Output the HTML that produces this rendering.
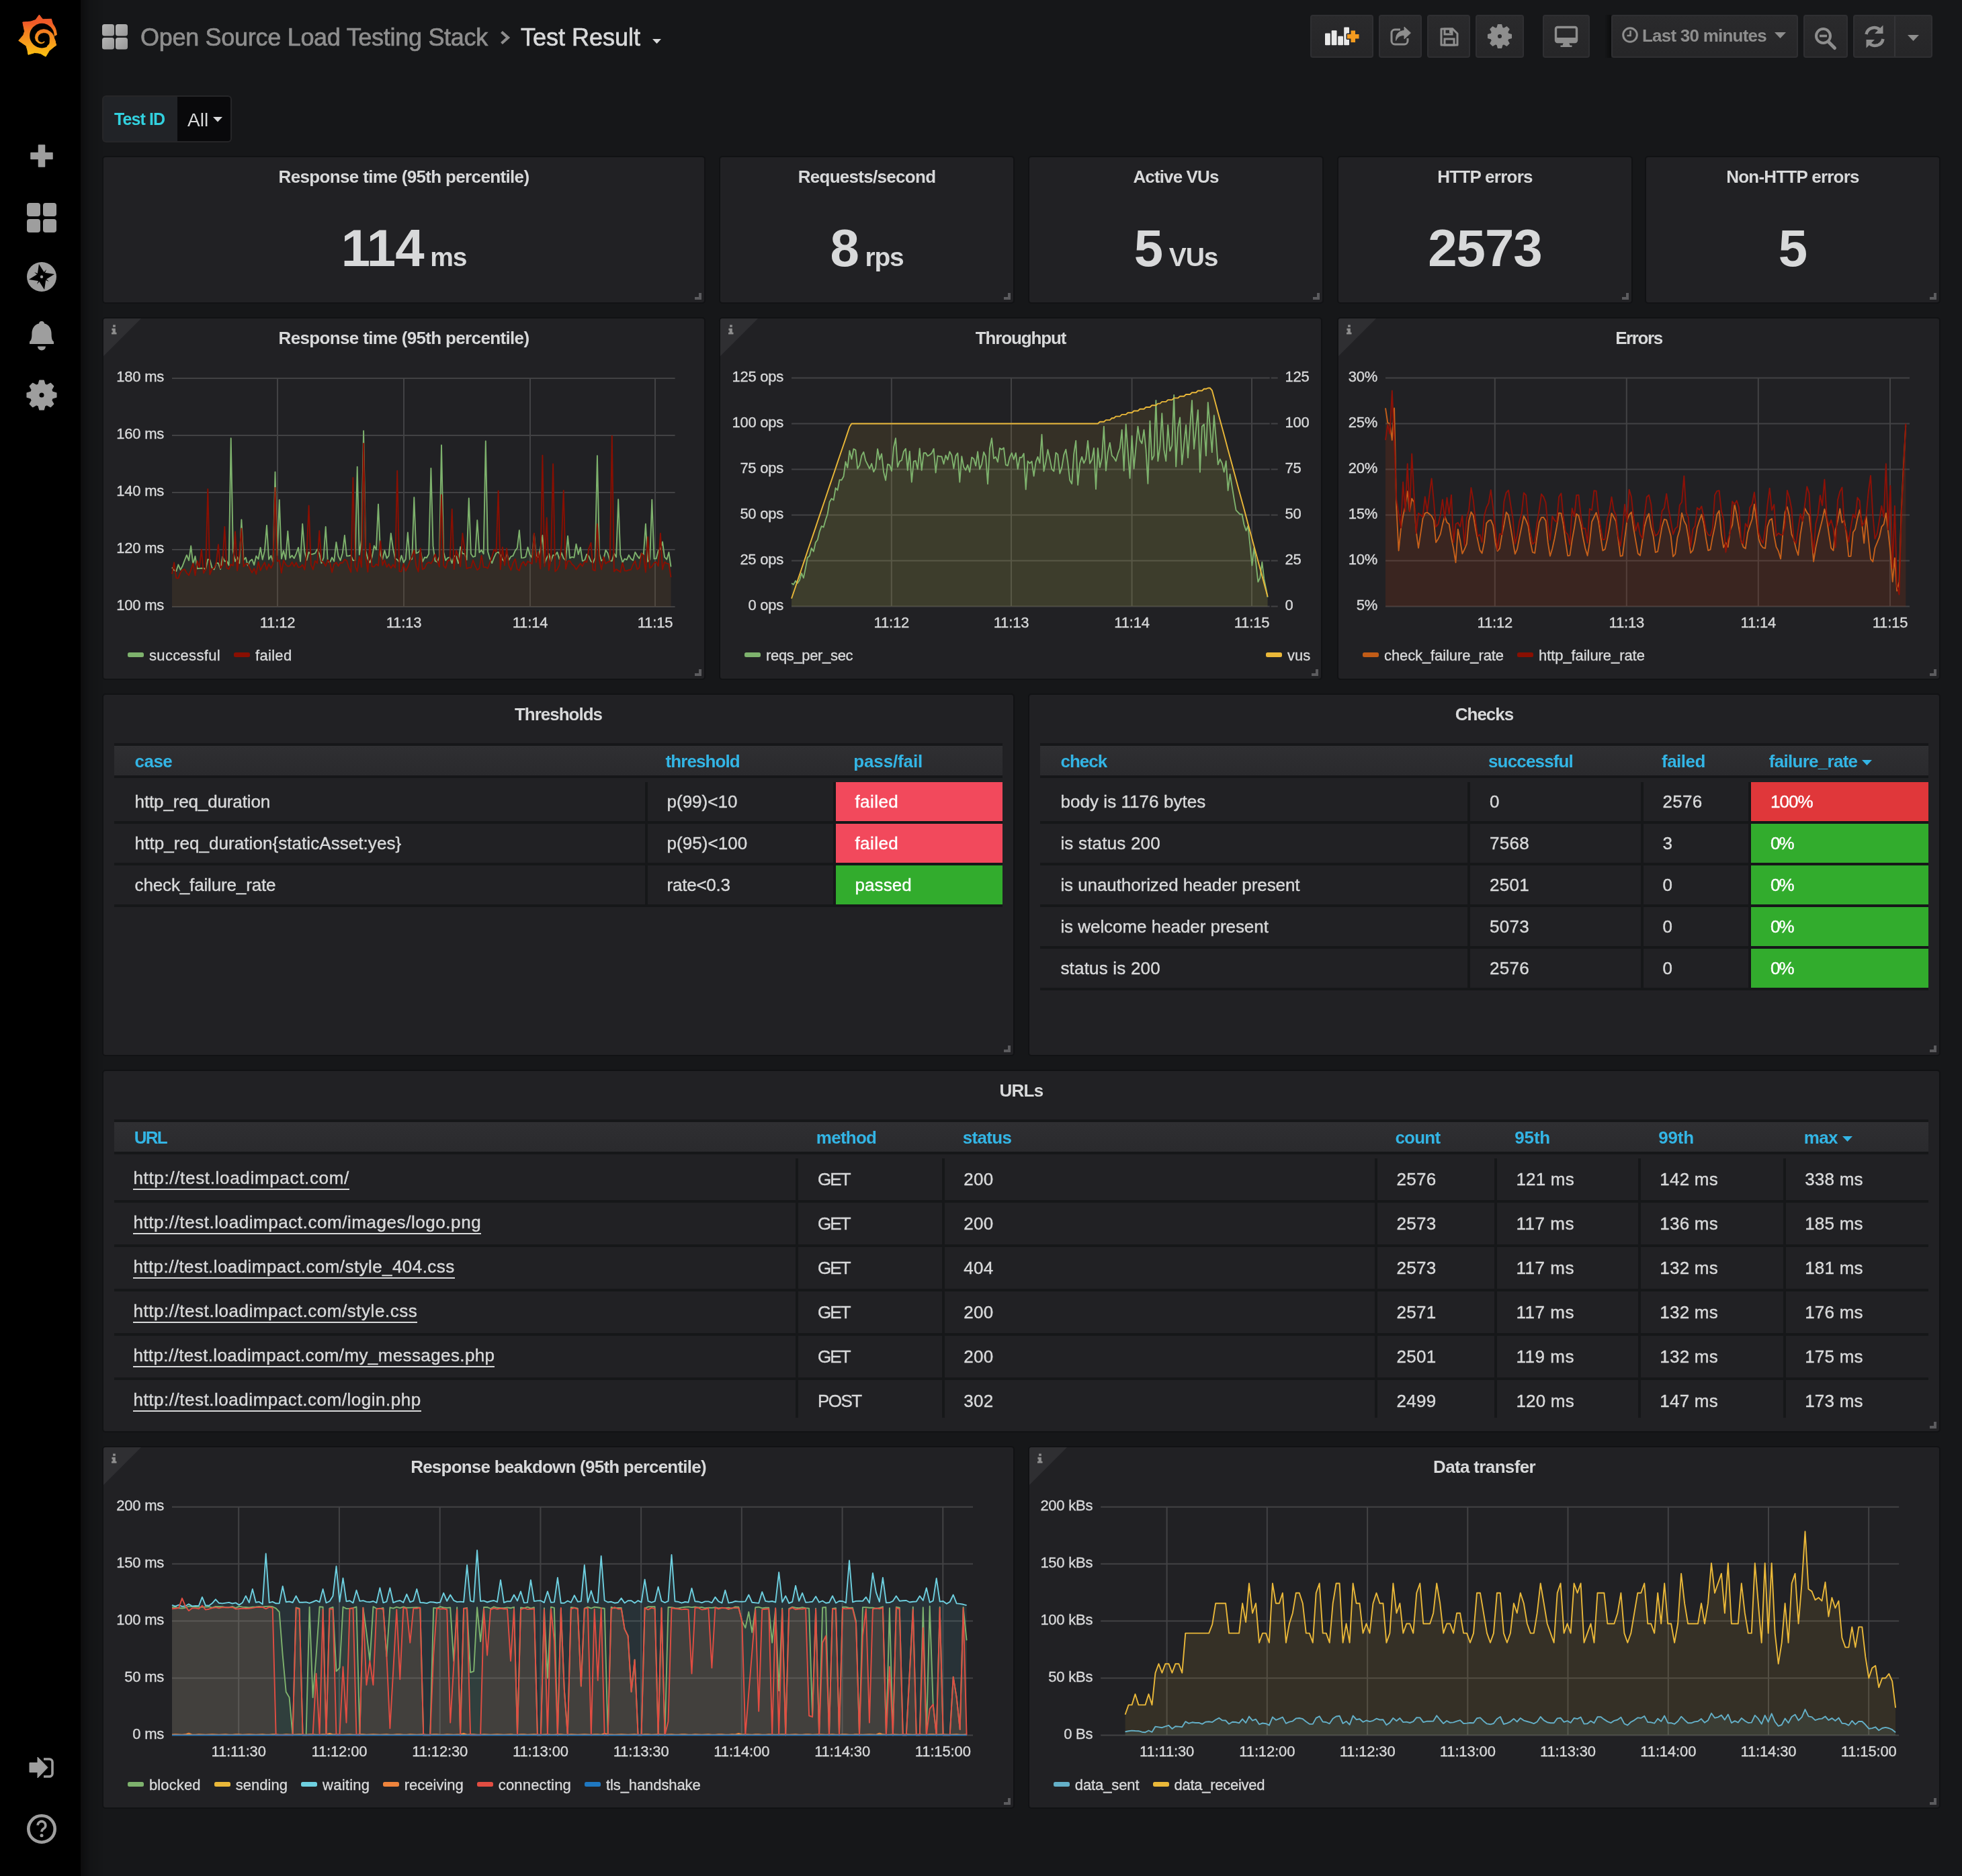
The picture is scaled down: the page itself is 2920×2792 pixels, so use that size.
<!DOCTYPE html><html><head><meta charset="utf-8"><title>Test Result - Grafana</title><style>
*{box-sizing:border-box}
html,body{margin:0;padding:0}
body{width:2920px;height:2792px;background:#161719;position:relative;overflow:hidden;font-family:"Liberation Sans",sans-serif;color:#d8d9da;font-size:26px}
.a{position:absolute}
#side{left:0;top:0;width:120px;height:2792px;background:#000}
#shade{left:120px;top:0;width:34px;height:2792px;background:linear-gradient(90deg,rgba(0,0,0,.42),rgba(0,0,0,.12) 40%,rgba(0,0,0,0))}
.p{position:absolute;background:#212124;border:2px solid #111214;border-radius:5px}
.t{position:absolute;left:0;right:0;top:13.5px;text-align:center;font-size:26px;line-height:30px;font-weight:700;letter-spacing:-.7px;white-space:pre}
.rz{position:absolute;right:4px;bottom:4px;width:10px;height:10px;border-right:4px solid #5b5b5e;border-bottom:4px solid #5b5b5e}
.ic{position:absolute;left:0;top:0;width:0;height:0;border-top:56px solid #2f2f32;border-right:56px solid transparent;border-top-left-radius:3px}
.ii{position:absolute;left:12px;top:8.8px;width:7.5px;height:15px}
.v{position:absolute;left:0;right:0;top:89px;text-align:center;white-space:pre;line-height:92px;height:92px}
.v b{font-weight:700;font-size:78px;letter-spacing:-1px}
.v i{font-style:normal;font-weight:700;font-size:39px;letter-spacing:-1.2px}
.nb{position:absolute;top:22px;height:64px;border-radius:4px;background:linear-gradient(180deg,#2a2a2c,#262628);border:2px solid #2f2f32}
svg{position:absolute;left:0;top:0;overflow:visible}
svg text{font-family:"Liberation Sans",sans-serif;font-size:22px;fill:#d8d9da;stroke:#d8d9da;stroke-width:.35px}
.lg{position:absolute;font-size:22px;line-height:26px;white-space:pre;letter-spacing:.2px;-webkit-text-stroke:.35px}
.lg s{position:absolute;width:24px;height:7px;border-radius:2.5px;top:8.4px}
.th{position:absolute;height:52px;background:linear-gradient(180deg,#2f2f32,#2a2a2d);border-top:4px solid #161719;border-bottom:4px solid #161719}
.h{position:absolute;font-size:26px;line-height:30px;color:#33b5e5;font-weight:700;letter-spacing:-.75px;white-space:pre}
.c{position:absolute;font-size:26px;line-height:30px;white-space:pre;letter-spacing:-.15px;-webkit-text-stroke:.4px}
.rb{position:absolute;height:4px;background:#161719}
.cb{position:absolute;width:4px;background:#161719}
.cc{position:absolute;height:58px}
.u{border-bottom:2px solid #d8d9da;padding-bottom:1px}
</style></head><body><div id="root" style="position:absolute;left:0;top:0;width:2920px;height:2792px;will-change:transform">
<div id="side" class="a"></div><div id="shade" class="a"></div>
<svg width="120" height="2792" viewBox="0 0 120 2792">
<defs><linearGradient id="gl" gradientUnits="userSpaceOnUse" x1="0" y1="84" x2="0" y2="22"><stop offset="0" stop-color="#fbc30f"/><stop offset=".25" stop-color="#f9a61a"/><stop offset=".6" stop-color="#f47e20"/><stop offset=".8" stop-color="#f05a28"/><stop offset="1" stop-color="#f05a28"/></linearGradient></defs>
<path d="M58.4 22 L61 25.5 L63.8 28.8 L69.9 28.5 L76.5 28.3 L77.4 32 L78.4 35.3 L81.7 40.5 L83.5 45.6 L84.4 51.7 L80.7 53.4 L80.5 56.9 L83.8 67.2 L78.9 70.5 L74.6 73.3 L71.8 78 L68.1 84.1 L63.8 81.8 L61 79.9 L56.8 78.9 L51.6 78.5 L42 81.3 L40.9 74.7 L39 68.2 L27.7 60.4 L34.8 52.2 L36.6 46.6 L35.2 40 L33.8 33 L40.4 32.5 L46 32 L53.1 29.5Z" fill="url(#gl)" stroke="url(#gl)" stroke-width="1" stroke-linejoin="round"/><circle cx="62.4" cy="53.1" r="18.3" fill="#000"/><path d="M66.4 62.1 L64.8 63.9 L61 65.1 L57.3 63.9 L53.5 60.7 L52.1 56 L53.1 51.3 L55.9 47.1 L60.1 44.5 L65.2 43.5 L70.4 44.5 L74.6 47.1 L77.9 49.9 L79.8 53.2 L80.5 56.9 L82.6 61.6 L81.7 68.6 L74.6 74.7 L71.3 72.4 L69.9 69.1 L73 65.8 L73.9 63.9 L74.2 56.9 L73.5 53.2 L71.3 50.3 L68.1 48.9 L64.8 48.7 L61 49.6 L57.7 52.2 L56.1 56 L56.6 59.7 L58.7 62.3 L61.5 63.2 L63.8 63 L65.7 61.6Z" fill="url(#gl)" stroke="url(#gl)" stroke-width=".6" stroke-linejoin="round"/>
<path d="M57.5 216h9v11.5h11.5v9h-11.5v11.5h-9v-11.5h-11.5v-9h11.5z" fill="#9e9e9e" stroke="#9e9e9e" stroke-width="1.5" stroke-linejoin="round"/>
<rect x="40" y="302" width="20" height="20" rx="4" fill="#9e9e9e"/>
<rect x="64" y="302" width="20" height="20" rx="4" fill="#9e9e9e"/>
<rect x="40" y="326" width="20" height="20" rx="4" fill="#9e9e9e"/>
<rect x="64" y="326" width="20" height="20" rx="4" fill="#9e9e9e"/>
<circle cx="62" cy="412" r="22" fill="#9e9e9e"/>
<path d="M62 392.5 L67.3 406.7 L81.5 412 L67.3 417.3 L62 431.5 L56.7 417.3 L42.5 412 L56.7 406.7Z" fill="#000" transform="rotate(-12 62 412)"/>
<path d="M62 399 L64 410 L75 412 L64 414 L62 425 L60 414 L49 412 L60 410Z" fill="#000" transform="rotate(33 62 412)"/>
<circle cx="62" cy="412" r="2.2" fill="#9e9e9e"/>
<path d="M62 478c2.5 0 4 1.6 4 3.6c7 1.6 10.6 7.6 10.6 15.4c0 7 1.2 9.6 3.4 11.6v3.4h-36v-3.4c2.2-2 3.4-4.6 3.4-11.6c0-7.8 3.6-13.8 10.6-15.4c0-2 1.5-3.6 4-3.6z" fill="#9e9e9e"/>
<path d="M56 515.5h12a6 6 0 0 1 -12 0z" fill="#9e9e9e"/>
<path d="M57.2 572.1 L58.9 566.2 L65.1 566.2 L66.8 572.1 L69.9 573.4 L75.2 570.4 L79.6 574.8 L76.6 580.1 L77.9 583.2 L83.8 584.9 L83.8 591.1 L77.9 592.8 L76.6 595.9 L79.6 601.2 L75.2 605.6 L69.9 602.6 L66.8 603.9 L65.1 609.8 L58.9 609.8 L57.2 603.9 L54.1 602.6 L48.8 605.6 L44.4 601.2 L47.4 595.9 L46.1 592.8 L40.2 591.1 L40.2 584.9 L46.1 583.2 L47.4 580.1 L44.4 574.8 L48.8 570.4 L54.1 573.4Z M57.7 588 a4.3 4.3 0 1 0 8.6 0 a4.3 4.3 0 1 0 -8.6 0Z" fill="#9e9e9e" fill-rule="evenodd" stroke="#9e9e9e" stroke-width="1.5" stroke-linejoin="round"/>
<path d="M44 2623.5h12v-8.5l15 15.5l-15 15.5v-8.5h-12z" fill="#9e9e9e" stroke="#9e9e9e" stroke-width="1" stroke-linejoin="round"/>
<path d="M65 2618h8.5a4.5 4.5 0 0 1 4.5 4.5v17a4.5 4.5 0 0 1 -4.5 4.5h-8.5" fill="none" stroke="#9e9e9e" stroke-width="3.6"/>
<circle cx="62" cy="2722" r="19.7" fill="none" stroke="#9e9e9e" stroke-width="4.6"/>
<path d="M56.2 2716.5a5.8 5.8 0 1 1 8.8 5c-2.2 1.4-3 2.4-3 4.7" fill="none" stroke="#9e9e9e" stroke-width="3.6"/>
<circle cx="62" cy="2731.7" r="2.5" fill="#9e9e9e"/>
</svg>
<svg width="2920" height="110" viewBox="0 0 2920 110">
<defs><linearGradient id="dg" x1="0" y1="0" x2="1" y2="1"><stop offset="0" stop-color="#b5b5b5"/><stop offset="1" stop-color="#979797"/></linearGradient></defs>
<rect x="152" y="36" width="18" height="17.5" rx="3.5" fill="url(#dg)"/>
<rect x="172" y="36" width="18" height="17.5" rx="3.5" fill="url(#dg)"/>
<rect x="152" y="56" width="18" height="17.5" rx="3.5" fill="url(#dg)"/>
<rect x="172" y="56" width="18" height="17.5" rx="3.5" fill="url(#dg)"/>
<path d="M746.5 47.5l9.5 8.5l-9.5 8.5" fill="none" stroke="#8e8e8e" stroke-width="4.2"/>
<path d="M971 58h13l-6.5 7z" fill="#d8d9da"/>
</svg>
<div class="a" style="left:209px;top:34.8px;font-size:36px;line-height:42px;color:#8e8e8e;letter-spacing:-.29px;-webkit-text-stroke:.7px;white-space:pre">Open Source Load Testing Stack</div>
<div class="a" style="left:775px;top:34.8px;font-size:36px;line-height:42px;color:#d8d9da;-webkit-text-stroke:.7px;white-space:pre">Test Result</div>
<div class="nb" style="left:1950px;width:94px"></div>
<div class="nb" style="left:2052px;width:64px"></div>
<div class="nb" style="left:2124px;width:64px"></div>
<div class="nb" style="left:2196px;width:72px"></div>
<div class="nb" style="left:2296px;width:70px"></div>
<div class="nb" style="left:2398px;width:278px"></div>
<div class="nb" style="left:2684px;width:66px"></div>
<div class="nb" style="left:2758px;width:118px"></div>
<div class="a" style="left:2388px;top:22px;width:10px;height:64px;background:linear-gradient(90deg,rgba(0,0,0,0),rgba(0,0,0,.45))"></div>
<div class="a" style="left:2819px;top:24px;width:2px;height:60px;background:#343437"></div>
<div class="a" style="left:2444px;top:38px;font-size:26px;line-height:30px;color:#8e8e8e;font-weight:700;letter-spacing:-.77px;white-space:pre">Last 30 minutes</div>
<svg width="2920" height="110" viewBox="0 0 2920 110">
<rect x="1972" y="49.5" width="7.8" height="17.8" rx="1" fill="#e9e9e9"/>
<rect x="1981.7" y="45.3" width="7.8" height="22" rx="1" fill="#e9e9e9"/>
<rect x="1991.2" y="53.8" width="7.8" height="13.5" rx="1" fill="#e9e9e9"/>
<rect x="2000.2" y="40.5" width="7.8" height="26.8" rx="1" fill="#e9e9e9"/>
<path d="M2010.5 45.5h6.5v5.5h5.5v6.5h-5.5v5.5h-6.5v-5.5h-5.5v-6.5h5.5z" fill="#f49b1f" stroke="#2a2a2c" stroke-width="3" stroke-linejoin="round"/>
<path d="M2010.5 45.5h6.5v5.5h5.5v6.5h-5.5v5.5h-6.5v-5.5h-5.5v-6.5h5.5z" fill="#f49b1f"/>
<path d="M2084 44h-8a5 5 0 0 0 -5 5v12a5 5 0 0 0 5 5h14a5 5 0 0 0 5 -5v-4" fill="none" stroke="#8e8e8e" stroke-width="3"/>
<path d="M2090 40l9.5 9l-9.5 9v-5.5c-7 0-10 2.5-12.5 8c-.5-9 3.5-14.5 12.5-15z" fill="#8e8e8e" stroke="#8e8e8e" stroke-width="1" stroke-linejoin="round"/>
<path d="M2145 43h17l7 7v17h-24z" fill="none" stroke="#8e8e8e" stroke-width="3" stroke-linejoin="round"/>
<rect x="2150" y="43" width="11" height="8" fill="none" stroke="#8e8e8e" stroke-width="3"/><rect x="2157" y="44" width="3" height="5" fill="#8e8e8e"/>
<rect x="2150" y="58" width="14" height="9" fill="none" stroke="#8e8e8e" stroke-width="3"/>
<path d="M2228.2 41.4 L2229.5 36.7 L2234.5 36.7 L2235.8 41.4 L2238.3 42.4 L2242.5 40 L2246 43.5 L2243.6 47.7 L2244.6 50.2 L2249.3 51.5 L2249.3 56.5 L2244.6 57.8 L2243.6 60.3 L2246 64.5 L2242.5 68 L2238.3 65.6 L2235.8 66.6 L2234.5 71.3 L2229.5 71.3 L2228.2 66.6 L2225.7 65.6 L2221.5 68 L2218 64.5 L2220.4 60.3 L2219.4 57.8 L2214.7 56.5 L2214.7 51.5 L2219.4 50.2 L2220.4 47.7 L2218 43.5 L2221.5 40 L2225.7 42.4Z M2228.2 54 a3.8 3.8 0 1 0 7.6 0 a3.8 3.8 0 1 0 -7.6 0Z" fill="#8e8e8e" fill-rule="evenodd" stroke="#8e8e8e" stroke-width="1.5" stroke-linejoin="round"/>
<rect x="2315.5" y="40.5" width="31" height="22" rx="2.5" fill="none" stroke="#8e8e8e" stroke-width="3.4"/><rect x="2317" y="56" width="28" height="5" fill="#8e8e8e"/>
<path d="M2327 63h8l1.5 4.5h3v2.5h-17v-2.5h3z" fill="#8e8e8e"/>
<circle cx="2426" cy="52" r="10.3" fill="none" stroke="#8e8e8e" stroke-width="3"/><path d="M2426.5 45.5v7.5h-5" fill="none" stroke="#8e8e8e" stroke-width="2.6"/>
<path d="M2641 48h17l-8.5 9z" fill="#8e8e8e"/>
<circle cx="2713.5" cy="53.5" r="10.5" fill="none" stroke="#8e8e8e" stroke-width="4"/><path d="M2721.5 62.5l9 9" stroke="#8e8e8e" stroke-width="5" stroke-linecap="round"/><path d="M2708 53.5h11" stroke="#8e8e8e" stroke-width="3.6"/>
<path d="M2777.5 51a12 12 0 0 1 21.5 -5" fill="none" stroke="#8e8e8e" stroke-width="4.6"/><path d="M2802.5 37.5v12.5h-12.5z" fill="#8e8e8e"/>
<path d="M2802.5 58a12 12 0 0 1 -21.5 5" fill="none" stroke="#8e8e8e" stroke-width="4.6"/><path d="M2777.5 71.5v-12.5h12.5z" fill="#8e8e8e"/>
<path d="M2839 52h17l-8.5 9z" fill="#8e8e8e"/>
</svg>
<div class="a" style="left:152px;top:142px;width:112px;height:70px;background:#212327;border:2px solid #262628;border-right:none;border-radius:6px 0 0 6px"></div>
<div class="a" style="left:264px;top:142px;width:81px;height:70px;background:#09090b;border:2px solid #262628;border-left:none;border-radius:0 6px 6px 0"></div>
<div class="a" style="left:170px;top:162px;font-size:25px;line-height:30px;color:#32d1df;font-weight:700;white-space:pre;letter-spacing:-.9px">Test ID</div>
<div class="a" style="left:279px;top:163.2px;font-size:28px;line-height:32px;color:#d8d9da;white-space:pre">All</div>
<svg width="400" height="240"><path d="M317 174h14l-7 7.5z" fill="#d8d9da"/></svg>
<div class="p" style="left:152px;top:232px;width:898px;height:220px">
<div class="t" style="letter-spacing:-0.65px">Response time (95th percentile)</div>
<div class="v"><b>114</b><i> ms</i></div>
<div class="rz"></div></div>
<div class="p" style="left:1070px;top:232px;width:440px;height:220px">
<div class="t" style="letter-spacing:-0.71px">Requests/second</div>
<div class="v"><b>8</b><i> rps</i></div>
<div class="rz"></div></div>
<div class="p" style="left:1530px;top:232px;width:440px;height:220px">
<div class="t" style="letter-spacing:-0.86px">Active VUs</div>
<div class="v"><b>5</b><i> VUs</i></div>
<div class="rz"></div></div>
<div class="p" style="left:1990px;top:232px;width:440px;height:220px">
<div class="t" style="letter-spacing:-0.74px">HTTP errors</div>
<div class="v"><b>2573</b></div>
<div class="rz"></div></div>
<div class="p" style="left:2448px;top:232px;width:440px;height:220px">
<div class="t" style="letter-spacing:-0.76px">Non-HTTP errors</div>
<div class="v"><b>5</b></div>
<div class="rz"></div></div>
<div class="p" style="left:152px;top:472px;width:898px;height:540px">
<div class="ic"></div><svg class="ii" viewBox="0 0 9 17"><path d="M2.5 0h4.5v4h-4.5zM.5 6.5h6.5v7h2v3.5h-9v-3.5h2v-3.5h-1.5z" fill="#8e8e8e"/></svg>
<div class="t" style="letter-spacing:-0.65px">Response time (95th percentile)</div>
<svg width="894" height="536" viewBox="154 474 894 536">
<path d="M256 563H1004.6M256 648H1004.6M256 733H1004.6M256 818H1004.6M256 903H1004.6M413 563V903M601 563V903M789 563V903M975 563V903" stroke="rgba(200,200,200,.2)" stroke-width="2" fill="none"/>
<polygon points="256,903 256,844.4 259.1,848.7 262.3,850.1 265.4,840.3 268.5,848 271.7,842.2 274.8,833.9 277.9,826.2 281.1,834.2 284.2,812.5 287.3,839.8 290.5,827.8 293.6,846.4 296.7,845.9 299.9,845.7 303,845.5 306.1,847.4 309.3,832.4 312.4,833.1 315.5,845 318.7,847.5 321.8,837.8 324.9,838.2 328.1,847.2 331.2,828.4 334.3,835.4 337.5,835 340.6,841.3 343.7,652.2 346.9,820.5 350,835.5 353.1,829.1 356.3,838.3 359.4,773.4 362.5,833.4 365.7,829.8 368.8,841.6 371.9,834.9 375.1,832.5 378.2,840.8 381.3,827.5 384.5,832 387.6,815 390.7,832.9 393.9,819.7 397,781.9 400.1,832.6 403.3,827 406.4,836.3 409.5,702.4 412.6,826.6 415.8,744 418.9,831.6 422,819.6 425.2,832.7 428.3,790.4 431.4,830.3 434.6,826.6 437.7,831 440.8,824.1 444,814.9 447.1,835.6 450.2,779.8 453.4,821.6 456.5,833.5 459.6,821.6 462.8,825 465.9,824.5 469,823.4 472.2,817.4 475.3,824.3 478.4,838.1 481.6,829.8 484.7,784 487.8,835.3 491,837.3 494.1,829.6 497.2,835.3 500.4,806.9 503.5,827.7 506.6,834 509.8,823.2 512.9,796.8 516,827.5 519.2,827.2 522.3,826.5 525.4,834 528.6,834.1 531.7,694.8 534.8,825.6 538,803.9 541.1,641.2 544.2,819.2 547.4,831.8 550.5,837.2 553.6,829.5 556.8,812.2 559.9,818.1 563,750.4 566.2,825.9 569.3,832.3 572.4,819.2 575.6,830.8 578.7,827 581.8,793.8 585,816.5 588.1,831.2 591.2,832.9 594.4,836.8 597.5,826.7 600.6,837 603.8,832.3 606.9,792.5 610,833 613.2,832.2 616.3,740.2 619.4,823.4 622.6,822 625.7,818.2 628.8,836 632,829.5 635.1,830 638.2,824.4 641.4,696.9 644.5,812.4 647.6,834.9 650.8,836.4 653.9,828.5 657,662.5 660.2,821.8 663.3,834 666.4,830.2 669.6,829.4 672.7,838.2 675.8,827.5 679,827.6 682.1,838.4 685.2,814 688.4,823.8 691.5,824.4 694.6,833.1 697.8,741.5 700.9,824.3 704,828.8 707.2,827.9 710.3,774.2 713.4,822.3 716.6,818.7 719.7,824.2 722.8,656.5 726,821.1 729.1,831.6 732.2,838.1 735.3,829.7 738.5,823 741.6,821.6 744.7,825.6 747.9,832.8 751,836.1 754.1,822.9 757.3,833.5 760.4,828.3 763.5,827.2 766.7,819.6 769.8,815.5 772.9,789.1 776.1,830.4 779.2,830.1 782.3,828.8 785.5,814.4 788.6,825.6 791.7,829.9 794.9,794.6 798,827.1 801.1,828.8 804.3,816 807.4,796.8 810.5,837.9 813.7,830.4 816.8,824.2 819.9,835 823.1,826.1 826.2,826.6 829.3,821.7 832.5,832.1 835.6,822.6 838.7,830.9 841.9,834.1 845,797.6 848.1,830.6 851.3,828.9 854.4,829.8 857.5,809.6 860.7,825 863.8,814.7 866.9,834.9 870.1,833.9 873.2,824.9 876.3,827.8 879.5,835.5 882.6,837.4 885.7,830.1 888.9,678.2 892,823.7 895.1,834.5 898.3,832.2 901.4,818.6 904.5,823.3 907.7,834.7 910.8,834.8 913.9,823.7 917.1,829.1 920.2,743.2 923.3,825.4 926.5,837 929.6,831.7 932.7,833.1 935.9,826.1 939,831.5 942.1,834.1 945.3,821.8 948.4,827.1 951.5,831.1 954.7,823.4 957.8,825.6 960.9,779.8 964.1,835.9 967.2,832.9 970.3,743.6 973.5,831.5 976.6,831.4 979.7,819.5 982.9,816.9 986,806.5 989.1,829.1 992.3,832.5 995.4,822 998.5,843.5 998.5,903" fill="#7EB26D" fill-opacity=".1"/>
<polygon points="256,903 256,854.1 259.1,837.3 262.3,860.3 265.4,860.6 268.5,852.1 271.7,848.2 274.8,847.2 277.9,852.8 281.1,856.2 284.2,848.2 287.3,838.3 290.5,856.3 293.6,834.9 296.7,844.3 299.9,817.7 303,852.9 306.1,847.6 309.3,727.9 312.4,855 315.5,847.1 318.7,845.1 321.8,837.8 324.9,810.4 328.1,845.7 331.2,840.9 334.3,784 337.5,845.4 340.6,846.9 343.7,839.9 346.9,842 350,791.2 353.1,849.3 356.3,824.4 359.4,786.5 362.5,843.4 365.7,839.2 368.8,838.6 371.9,846.3 375.1,852.3 378.2,846 381.3,854.5 384.5,836.1 387.6,849 390.7,842.4 393.9,837.1 397,847.9 400.1,839.4 403.3,845.5 406.4,839 409.5,725.8 412.6,835.3 415.8,833.8 418.9,852.7 422,833.9 425.2,840 428.3,842.9 431.4,842.2 434.6,836.6 437.7,842.9 440.8,837.2 444,844.3 447.1,843.9 450.2,840.4 453.4,847.8 456.5,823.1 459.6,752.5 462.8,840.2 465.9,847.6 469,834.7 472.2,838.4 475.3,790 478.4,835 481.6,837.1 484.7,842.4 487.8,833.5 491,837.7 494.1,851.8 497.2,839.5 500.4,837 503.5,842.6 506.6,837.5 509.8,837.7 512.9,832.7 516,834.3 519.2,844.7 522.3,851.6 525.4,710.9 528.6,842.5 531.7,850.6 534.8,828.4 538,844.1 541.1,659.9 544.2,828.7 547.4,851.1 550.5,808.6 553.6,843.2 556.8,843.5 559.9,839.5 563,842.1 566.2,805.2 569.3,841.4 572.4,833.7 575.6,844 578.7,839.4 581.8,845.6 585,840.3 588.1,845.1 591.2,700.7 594.4,850.4 597.5,850.6 600.6,839 603.8,849.8 606.9,843.8 610,835.3 613.2,828 616.3,818.9 619.4,842.4 622.6,850.8 625.7,816.3 628.8,847.4 632,845.7 635.1,838.8 638.2,836.9 641.4,838.7 644.5,833.5 647.6,824.7 650.8,835 653.9,843.5 657,736.4 660.2,841.7 663.3,845.6 666.4,834.3 669.6,833.5 672.7,757.7 675.8,847.1 679,819.1 682.1,828.6 685.2,843.2 688.4,793.8 691.5,817.4 694.6,846.3 697.8,844.6 700.9,844.9 704,833.5 707.2,841.9 710.3,848.3 713.4,845.8 716.6,826.8 719.7,844.1 722.8,844 726,845.8 729.1,837.2 732.2,828.6 735.3,817.8 738.5,821.4 741.6,730.5 744.7,847.4 747.9,814.4 751,841.5 754.1,816.2 757.3,841.3 760.4,848.6 763.5,838.2 766.7,831.8 769.8,847.1 772.9,849.3 776.1,839.1 779.2,836 782.3,842.2 785.5,835.2 788.6,837.4 791.7,839 794.9,793.8 798,836.9 801.1,821.2 804.3,846.4 807.4,677.8 810.5,842.7 813.7,770.4 816.8,848.8 819.9,832.4 823.1,690.5 826.2,850.5 829.3,847.6 832.5,841 835.6,810.8 838.7,730 841.9,846.7 845,835.2 848.1,834.6 851.3,839.7 854.4,842.3 857.5,847.6 860.7,842.9 863.8,838.6 866.9,842.7 870.1,835 873.2,836.8 876.3,816.6 879.5,807.8 882.6,848 885.7,849.3 888.9,779.8 892,833.4 895.1,847.5 898.3,828.6 901.4,839 904.5,836.2 907.7,835.7 910.8,648.8 913.9,850.6 917.1,847.1 920.2,849.1 923.3,851.6 926.5,837.6 929.6,849.2 932.7,849.5 935.9,848.2 939,847.8 942.1,840.2 945.3,834.8 948.4,847.6 951.5,844.8 954.7,823.3 957.8,826.8 960.9,851.6 964.1,799.3 967.2,845.5 970.3,843.2 973.5,837.6 976.6,836.5 979.7,842.5 982.9,793.8 986,847.5 989.1,836.5 992.3,838.6 995.4,839.2 998.5,859.2 998.5,903" fill="#890F02" fill-opacity=".1"/>
<polyline points="256,844.4 259.1,848.7 262.3,850.1 265.4,840.3 268.5,848 271.7,842.2 274.8,833.9 277.9,826.2 281.1,834.2 284.2,812.5 287.3,839.8 290.5,827.8 293.6,846.4 296.7,845.9 299.9,845.7 303,845.5 306.1,847.4 309.3,832.4 312.4,833.1 315.5,845 318.7,847.5 321.8,837.8 324.9,838.2 328.1,847.2 331.2,828.4 334.3,835.4 337.5,835 340.6,841.3 343.7,652.2 346.9,820.5 350,835.5 353.1,829.1 356.3,838.3 359.4,773.4 362.5,833.4 365.7,829.8 368.8,841.6 371.9,834.9 375.1,832.5 378.2,840.8 381.3,827.5 384.5,832 387.6,815 390.7,832.9 393.9,819.7 397,781.9 400.1,832.6 403.3,827 406.4,836.3 409.5,702.4 412.6,826.6 415.8,744 418.9,831.6 422,819.6 425.2,832.7 428.3,790.4 431.4,830.3 434.6,826.6 437.7,831 440.8,824.1 444,814.9 447.1,835.6 450.2,779.8 453.4,821.6 456.5,833.5 459.6,821.6 462.8,825 465.9,824.5 469,823.4 472.2,817.4 475.3,824.3 478.4,838.1 481.6,829.8 484.7,784 487.8,835.3 491,837.3 494.1,829.6 497.2,835.3 500.4,806.9 503.5,827.7 506.6,834 509.8,823.2 512.9,796.8 516,827.5 519.2,827.2 522.3,826.5 525.4,834 528.6,834.1 531.7,694.8 534.8,825.6 538,803.9 541.1,641.2 544.2,819.2 547.4,831.8 550.5,837.2 553.6,829.5 556.8,812.2 559.9,818.1 563,750.4 566.2,825.9 569.3,832.3 572.4,819.2 575.6,830.8 578.7,827 581.8,793.8 585,816.5 588.1,831.2 591.2,832.9 594.4,836.8 597.5,826.7 600.6,837 603.8,832.3 606.9,792.5 610,833 613.2,832.2 616.3,740.2 619.4,823.4 622.6,822 625.7,818.2 628.8,836 632,829.5 635.1,830 638.2,824.4 641.4,696.9 644.5,812.4 647.6,834.9 650.8,836.4 653.9,828.5 657,662.5 660.2,821.8 663.3,834 666.4,830.2 669.6,829.4 672.7,838.2 675.8,827.5 679,827.6 682.1,838.4 685.2,814 688.4,823.8 691.5,824.4 694.6,833.1 697.8,741.5 700.9,824.3 704,828.8 707.2,827.9 710.3,774.2 713.4,822.3 716.6,818.7 719.7,824.2 722.8,656.5 726,821.1 729.1,831.6 732.2,838.1 735.3,829.7 738.5,823 741.6,821.6 744.7,825.6 747.9,832.8 751,836.1 754.1,822.9 757.3,833.5 760.4,828.3 763.5,827.2 766.7,819.6 769.8,815.5 772.9,789.1 776.1,830.4 779.2,830.1 782.3,828.8 785.5,814.4 788.6,825.6 791.7,829.9 794.9,794.6 798,827.1 801.1,828.8 804.3,816 807.4,796.8 810.5,837.9 813.7,830.4 816.8,824.2 819.9,835 823.1,826.1 826.2,826.6 829.3,821.7 832.5,832.1 835.6,822.6 838.7,830.9 841.9,834.1 845,797.6 848.1,830.6 851.3,828.9 854.4,829.8 857.5,809.6 860.7,825 863.8,814.7 866.9,834.9 870.1,833.9 873.2,824.9 876.3,827.8 879.5,835.5 882.6,837.4 885.7,830.1 888.9,678.2 892,823.7 895.1,834.5 898.3,832.2 901.4,818.6 904.5,823.3 907.7,834.7 910.8,834.8 913.9,823.7 917.1,829.1 920.2,743.2 923.3,825.4 926.5,837 929.6,831.7 932.7,833.1 935.9,826.1 939,831.5 942.1,834.1 945.3,821.8 948.4,827.1 951.5,831.1 954.7,823.4 957.8,825.6 960.9,779.8 964.1,835.9 967.2,832.9 970.3,743.6 973.5,831.5 976.6,831.4 979.7,819.5 982.9,816.9 986,806.5 989.1,829.1 992.3,832.5 995.4,822 998.5,843.5" fill="none" stroke="#7EB26D" stroke-width="1.9" stroke-linejoin="round"/>
<polyline points="256,854.1 259.1,837.3 262.3,860.3 265.4,860.6 268.5,852.1 271.7,848.2 274.8,847.2 277.9,852.8 281.1,856.2 284.2,848.2 287.3,838.3 290.5,856.3 293.6,834.9 296.7,844.3 299.9,817.7 303,852.9 306.1,847.6 309.3,727.9 312.4,855 315.5,847.1 318.7,845.1 321.8,837.8 324.9,810.4 328.1,845.7 331.2,840.9 334.3,784 337.5,845.4 340.6,846.9 343.7,839.9 346.9,842 350,791.2 353.1,849.3 356.3,824.4 359.4,786.5 362.5,843.4 365.7,839.2 368.8,838.6 371.9,846.3 375.1,852.3 378.2,846 381.3,854.5 384.5,836.1 387.6,849 390.7,842.4 393.9,837.1 397,847.9 400.1,839.4 403.3,845.5 406.4,839 409.5,725.8 412.6,835.3 415.8,833.8 418.9,852.7 422,833.9 425.2,840 428.3,842.9 431.4,842.2 434.6,836.6 437.7,842.9 440.8,837.2 444,844.3 447.1,843.9 450.2,840.4 453.4,847.8 456.5,823.1 459.6,752.5 462.8,840.2 465.9,847.6 469,834.7 472.2,838.4 475.3,790 478.4,835 481.6,837.1 484.7,842.4 487.8,833.5 491,837.7 494.1,851.8 497.2,839.5 500.4,837 503.5,842.6 506.6,837.5 509.8,837.7 512.9,832.7 516,834.3 519.2,844.7 522.3,851.6 525.4,710.9 528.6,842.5 531.7,850.6 534.8,828.4 538,844.1 541.1,659.9 544.2,828.7 547.4,851.1 550.5,808.6 553.6,843.2 556.8,843.5 559.9,839.5 563,842.1 566.2,805.2 569.3,841.4 572.4,833.7 575.6,844 578.7,839.4 581.8,845.6 585,840.3 588.1,845.1 591.2,700.7 594.4,850.4 597.5,850.6 600.6,839 603.8,849.8 606.9,843.8 610,835.3 613.2,828 616.3,818.9 619.4,842.4 622.6,850.8 625.7,816.3 628.8,847.4 632,845.7 635.1,838.8 638.2,836.9 641.4,838.7 644.5,833.5 647.6,824.7 650.8,835 653.9,843.5 657,736.4 660.2,841.7 663.3,845.6 666.4,834.3 669.6,833.5 672.7,757.7 675.8,847.1 679,819.1 682.1,828.6 685.2,843.2 688.4,793.8 691.5,817.4 694.6,846.3 697.8,844.6 700.9,844.9 704,833.5 707.2,841.9 710.3,848.3 713.4,845.8 716.6,826.8 719.7,844.1 722.8,844 726,845.8 729.1,837.2 732.2,828.6 735.3,817.8 738.5,821.4 741.6,730.5 744.7,847.4 747.9,814.4 751,841.5 754.1,816.2 757.3,841.3 760.4,848.6 763.5,838.2 766.7,831.8 769.8,847.1 772.9,849.3 776.1,839.1 779.2,836 782.3,842.2 785.5,835.2 788.6,837.4 791.7,839 794.9,793.8 798,836.9 801.1,821.2 804.3,846.4 807.4,677.8 810.5,842.7 813.7,770.4 816.8,848.8 819.9,832.4 823.1,690.5 826.2,850.5 829.3,847.6 832.5,841 835.6,810.8 838.7,730 841.9,846.7 845,835.2 848.1,834.6 851.3,839.7 854.4,842.3 857.5,847.6 860.7,842.9 863.8,838.6 866.9,842.7 870.1,835 873.2,836.8 876.3,816.6 879.5,807.8 882.6,848 885.7,849.3 888.9,779.8 892,833.4 895.1,847.5 898.3,828.6 901.4,839 904.5,836.2 907.7,835.7 910.8,648.8 913.9,850.6 917.1,847.1 920.2,849.1 923.3,851.6 926.5,837.6 929.6,849.2 932.7,849.5 935.9,848.2 939,847.8 942.1,840.2 945.3,834.8 948.4,847.6 951.5,844.8 954.7,823.3 957.8,826.8 960.9,851.6 964.1,799.3 967.2,845.5 970.3,843.2 973.5,837.6 976.6,836.5 979.7,842.5 982.9,793.8 986,847.5 989.1,836.5 992.3,838.6 995.4,839.2 998.5,859.2" fill="none" stroke="#890F02" stroke-width="1.9" stroke-linejoin="round"/>
<text x="244" y="568.3" text-anchor="end" letter-spacing="-.24">180 ms</text>
<text x="244" y="653.3" text-anchor="end" letter-spacing="-.24">160 ms</text>
<text x="244" y="738.3" text-anchor="end" letter-spacing="-.24">140 ms</text>
<text x="244" y="823.3" text-anchor="end" letter-spacing="-.24">120 ms</text>
<text x="244" y="908.3" text-anchor="end" letter-spacing="-.24">100 ms</text>
<text x="413" y="934.4" text-anchor="middle" letter-spacing="-.14">11:12</text>
<text x="601" y="934.4" text-anchor="middle" letter-spacing="-.14">11:13</text>
<text x="789" y="934.4" text-anchor="middle" letter-spacing="-.14">11:14</text>
<text x="975" y="934.4" text-anchor="middle" letter-spacing="-.14">11:15</text>
</svg>
<div class="lg" style="left:36px;top:489px;letter-spacing:0.32px"><s style="background:#7EB26D"></s><span style="margin-left:32px">successful</span></div>
<div class="lg" style="left:194px;top:489px;letter-spacing:0.31px"><s style="background:#890F02"></s><span style="margin-left:32px">failed</span></div>
<div class="rz"></div></div>
<div class="p" style="left:1070px;top:472px;width:898px;height:540px">
<div class="ic"></div><svg class="ii" viewBox="0 0 9 17"><path d="M2.5 0h4.5v4h-4.5zM.5 6.5h6.5v7h2v3.5h-9v-3.5h2v-3.5h-1.5z" fill="#8e8e8e"/></svg>
<div class="t" style="letter-spacing:-1.15px">Throughput</div>
<svg width="894" height="536" viewBox="1072 474 894 536">
<path d="M1178 562.5H1889.7M1891.7 562.5H1901.7M1178 630.5H1889.7M1891.7 630.5H1901.7M1178 698.5H1889.7M1891.7 698.5H1901.7M1178 766.5H1889.7M1891.7 766.5H1901.7M1178 834.5H1889.7M1891.7 834.5H1901.7M1178 902.5H1889.7M1891.7 902.5H1901.7M1326.8 562.5V902.5M1505 562.5V902.5M1684.6 562.5V902.5M1863 562.5V902.5" stroke="rgba(200,200,200,.2)" stroke-width="2" fill="none"/>
<polygon points="1178,902.5 1178,868.2 1181,869.9 1184,864.4 1186.9,867.9 1189.9,863.7 1192.9,853.1 1195.9,860.1 1198.9,845.4 1201.8,830 1204.8,827.2 1207.8,815.6 1210.8,820.8 1213.8,807.4 1216.7,803.5 1219.7,791.1 1222.7,783 1225.7,784.6 1228.7,773.7 1231.6,765.1 1234.6,747.1 1237.6,742 1240.6,744.3 1243.6,726.3 1246.5,729.5 1249.5,714.1 1252.5,714.5 1255.5,709 1258.5,687.2 1261.4,696 1264.4,670.7 1267.4,683.4 1270.4,668.1 1273.4,669.9 1276.3,697.6 1279.3,692.5 1282.3,678.1 1285.3,672.8 1288.3,685.6 1291.2,691.3 1294.2,697.5 1297.2,690 1300.2,702.2 1303.2,696.5 1306.1,668.1 1309.1,684 1312.1,675.4 1315.1,702.5 1318.1,714.8 1321,691 1324,692 1327,701 1330,666 1333,652.3 1335.9,694.9 1338.9,686.6 1341.9,685.2 1344.9,672 1347.9,667.8 1350.8,699.9 1353.8,671.8 1356.8,717.5 1359.8,686.7 1362.8,685.7 1365.7,698.4 1368.7,667.4 1371.7,699.9 1374.7,674.2 1377.7,674 1380.6,678.7 1383.6,677.1 1386.6,674.6 1389.6,667.9 1392.6,703.5 1395.5,678.4 1398.5,679.3 1401.5,679.4 1404.5,690.6 1407.5,677.7 1410.4,684.2 1413.4,672.1 1416.4,677.6 1419.4,697.4 1422.4,678.6 1425.3,674.4 1428.3,717.5 1431.3,679.2 1434.3,695.3 1437.3,699.7 1440.2,691.9 1443.2,702.6 1446.2,680.6 1449.2,682.8 1452.2,693.3 1455.1,672.3 1458.1,698.4 1461.1,691 1464.1,672.8 1467.1,679.5 1470,720.3 1473,667.1 1476,652.3 1479,682.4 1482,680 1484.9,687.5 1487.9,666.9 1490.9,669.1 1493.9,666.6 1496.9,691.8 1499.8,693 1502.8,680.3 1505.8,674.2 1508.8,683.7 1511.8,674.2 1514.7,698 1517.7,680.8 1520.7,680.9 1523.7,675 1526.7,728.4 1529.6,686.3 1532.6,689.7 1535.6,686.6 1538.6,708.6 1541.6,687.7 1544.5,679.9 1547.5,689.3 1550.5,646.8 1553.5,701.4 1556.5,687.5 1559.4,669.3 1562.4,683 1565.4,698.1 1568.4,701.3 1571.4,673.8 1574.3,676.4 1577.3,704.7 1580.3,695.6 1583.3,676.8 1586.3,669 1589.2,688.2 1592.2,714.7 1595.2,720 1598.2,675.7 1601.2,655.9 1604.1,721.8 1607.1,689.4 1610.1,679.9 1613.1,689.4 1616.1,682.9 1619,655.9 1622,689.8 1625,684.3 1628,667 1631,727.9 1633.9,667 1636.9,695.5 1639.9,681.2 1642.9,634.6 1645.9,700.5 1648.8,673.1 1651.8,658.9 1654.8,678.2 1657.8,681.2 1660.8,686.3 1663.7,675.2 1666.7,667 1669.7,639.6 1672.7,700.5 1675.7,631.5 1678.6,671.1 1681.6,711.7 1684.6,648.8 1687.6,697.5 1690.6,665 1693.5,634.6 1696.5,654.9 1699.5,659.9 1702.5,639.6 1705.5,669.1 1708.4,719.8 1711.4,626.4 1714.4,684.3 1717.4,678.2 1720.4,596 1723.3,686.3 1726.3,665 1729.3,615.3 1732.3,669.1 1735.3,686.3 1738.2,632.5 1741.2,671.1 1744.2,663 1747.2,587.9 1750.2,694.4 1753.1,636.6 1756.1,621.4 1759.1,691.4 1762.1,660.9 1765.1,632.5 1768,681.2 1771,636.6 1774,596 1777,668.1 1780,638.6 1782.9,610.2 1785.9,702.6 1788.9,634.6 1791.9,631.5 1794.9,678.2 1797.8,599 1800.8,634.6 1803.8,673.1 1806.8,618.3 1809.8,652.8 1812.7,691.4 1815.7,683.3 1818.7,689.4 1821.7,702.6 1824.7,686.3 1827.6,730 1830.6,705.6 1833.6,723.9 1836.6,742.1 1839.6,759.4 1842.5,762.4 1845.5,765.5 1848.5,765.5 1851.5,780.7 1854.5,789.8 1857.4,782.7 1860.4,811.2 1863.4,841.6 1866.4,815.2 1869.4,839.6 1872.3,866 1875.3,859.9 1878.3,836.5 1881.3,861.9 1884.3,876.1 1886.6,888.9 1886.6,902.5" fill="#7EB26D" fill-opacity=".1"/>
<polygon points="1178,902.5 1178,890.8 1181,882 1184,873.2 1186.9,864.4 1189.9,855.6 1192.9,846.7 1195.9,837.9 1198.9,829.1 1201.8,820.3 1204.8,811.5 1207.8,802.7 1210.8,793.9 1213.8,785.1 1216.7,776.2 1219.7,767.4 1222.7,758.6 1225.7,749.8 1228.7,741 1231.6,732.2 1234.6,723.4 1237.6,714.6 1240.6,705.7 1243.6,696.9 1246.5,688.1 1249.5,679.3 1252.5,670.5 1255.5,661.7 1258.5,652.9 1261.4,644.1 1264.4,635.2 1267.4,630.5 1270.4,630.5 1273.4,630.5 1276.3,630.5 1279.3,630.5 1282.3,630.5 1285.3,630.5 1288.3,630.5 1291.2,630.5 1294.2,630.5 1297.2,630.5 1300.2,630.5 1303.2,630.5 1306.1,630.5 1309.1,630.5 1312.1,630.5 1315.1,630.5 1318.1,630.5 1321,630.5 1324,630.5 1327,630.5 1330,630.5 1333,630.5 1335.9,630.5 1338.9,630.5 1341.9,630.5 1344.9,630.5 1347.9,630.5 1350.8,630.5 1353.8,630.5 1356.8,630.5 1359.8,630.5 1362.8,630.5 1365.7,630.5 1368.7,630.5 1371.7,630.5 1374.7,630.5 1377.7,630.5 1380.6,630.5 1383.6,630.5 1386.6,630.5 1389.6,630.5 1392.6,630.5 1395.5,630.5 1398.5,630.5 1401.5,630.5 1404.5,630.5 1407.5,630.5 1410.4,630.5 1413.4,630.5 1416.4,630.5 1419.4,630.5 1422.4,630.5 1425.3,630.5 1428.3,630.5 1431.3,630.5 1434.3,630.5 1437.3,630.5 1440.2,630.5 1443.2,630.5 1446.2,630.5 1449.2,630.5 1452.2,630.5 1455.1,630.5 1458.1,630.5 1461.1,630.5 1464.1,630.5 1467.1,630.5 1470,630.5 1473,630.5 1476,630.5 1479,630.5 1482,630.5 1484.9,630.5 1487.9,630.5 1490.9,630.5 1493.9,630.5 1496.9,630.5 1499.8,630.5 1502.8,630.5 1505.8,630.5 1508.8,630.5 1511.8,630.5 1514.7,630.5 1517.7,630.5 1520.7,630.5 1523.7,630.5 1526.7,630.5 1529.6,630.5 1532.6,630.5 1535.6,630.5 1538.6,630.5 1541.6,630.5 1544.5,630.5 1547.5,630.5 1550.5,630.5 1553.5,630.5 1556.5,630.5 1559.4,630.5 1562.4,630.5 1565.4,630.5 1568.4,630.5 1571.4,630.5 1574.3,630.5 1577.3,630.5 1580.3,630.5 1583.3,630.5 1586.3,630.5 1589.2,630.5 1592.2,630.5 1595.2,630.5 1598.2,630.5 1601.2,630.5 1604.1,630.5 1607.1,630.5 1610.1,630.5 1613.1,630.5 1616.1,630.5 1619,630.5 1622,630.5 1625,630.5 1628,630.5 1631,630.5 1633.9,630.5 1636.9,627.8 1639.9,627.8 1642.9,627.8 1645.9,625.1 1648.8,625.1 1651.8,625.1 1654.8,622.3 1657.8,622.3 1660.8,619.6 1663.7,619.6 1666.7,619.6 1669.7,616.9 1672.7,616.9 1675.7,616.9 1678.6,614.2 1681.6,614.2 1684.6,614.2 1687.6,611.5 1690.6,611.5 1693.5,611.5 1696.5,608.7 1699.5,608.7 1702.5,608.7 1705.5,606 1708.4,606 1711.4,606 1714.4,603.3 1717.4,603.3 1720.4,603.3 1723.3,600.6 1726.3,600.6 1729.3,597.9 1732.3,597.9 1735.3,597.9 1738.2,595.1 1741.2,595.1 1744.2,595.1 1747.2,592.4 1750.2,592.4 1753.1,592.4 1756.1,589.7 1759.1,589.7 1762.1,589.7 1765.1,587 1768,587 1771,587 1774,584.3 1777,584.3 1780,584.3 1782.9,581.5 1785.9,581.5 1788.9,581.5 1791.9,578.8 1794.9,578.8 1797.8,577.5 1800.8,577.5 1803.8,580.8 1806.8,591.8 1809.8,602.9 1812.7,613.9 1815.7,625 1818.7,636 1821.7,647.1 1824.7,658.2 1827.6,669.2 1830.6,680.3 1833.6,691.3 1836.6,702.4 1839.6,713.4 1842.5,724.5 1845.5,735.5 1848.5,746.6 1851.5,757.6 1854.5,768.7 1857.4,779.8 1860.4,790.8 1863.4,801.9 1866.4,812.9 1869.4,824 1872.3,835 1875.3,846.1 1878.3,857.1 1881.3,868.2 1884.3,879.2 1886.6,888.1 1886.6,902.5" fill="#EAB839" fill-opacity=".1"/>
<polyline points="1178,868.2 1181,869.9 1184,864.4 1186.9,867.9 1189.9,863.7 1192.9,853.1 1195.9,860.1 1198.9,845.4 1201.8,830 1204.8,827.2 1207.8,815.6 1210.8,820.8 1213.8,807.4 1216.7,803.5 1219.7,791.1 1222.7,783 1225.7,784.6 1228.7,773.7 1231.6,765.1 1234.6,747.1 1237.6,742 1240.6,744.3 1243.6,726.3 1246.5,729.5 1249.5,714.1 1252.5,714.5 1255.5,709 1258.5,687.2 1261.4,696 1264.4,670.7 1267.4,683.4 1270.4,668.1 1273.4,669.9 1276.3,697.6 1279.3,692.5 1282.3,678.1 1285.3,672.8 1288.3,685.6 1291.2,691.3 1294.2,697.5 1297.2,690 1300.2,702.2 1303.2,696.5 1306.1,668.1 1309.1,684 1312.1,675.4 1315.1,702.5 1318.1,714.8 1321,691 1324,692 1327,701 1330,666 1333,652.3 1335.9,694.9 1338.9,686.6 1341.9,685.2 1344.9,672 1347.9,667.8 1350.8,699.9 1353.8,671.8 1356.8,717.5 1359.8,686.7 1362.8,685.7 1365.7,698.4 1368.7,667.4 1371.7,699.9 1374.7,674.2 1377.7,674 1380.6,678.7 1383.6,677.1 1386.6,674.6 1389.6,667.9 1392.6,703.5 1395.5,678.4 1398.5,679.3 1401.5,679.4 1404.5,690.6 1407.5,677.7 1410.4,684.2 1413.4,672.1 1416.4,677.6 1419.4,697.4 1422.4,678.6 1425.3,674.4 1428.3,717.5 1431.3,679.2 1434.3,695.3 1437.3,699.7 1440.2,691.9 1443.2,702.6 1446.2,680.6 1449.2,682.8 1452.2,693.3 1455.1,672.3 1458.1,698.4 1461.1,691 1464.1,672.8 1467.1,679.5 1470,720.3 1473,667.1 1476,652.3 1479,682.4 1482,680 1484.9,687.5 1487.9,666.9 1490.9,669.1 1493.9,666.6 1496.9,691.8 1499.8,693 1502.8,680.3 1505.8,674.2 1508.8,683.7 1511.8,674.2 1514.7,698 1517.7,680.8 1520.7,680.9 1523.7,675 1526.7,728.4 1529.6,686.3 1532.6,689.7 1535.6,686.6 1538.6,708.6 1541.6,687.7 1544.5,679.9 1547.5,689.3 1550.5,646.8 1553.5,701.4 1556.5,687.5 1559.4,669.3 1562.4,683 1565.4,698.1 1568.4,701.3 1571.4,673.8 1574.3,676.4 1577.3,704.7 1580.3,695.6 1583.3,676.8 1586.3,669 1589.2,688.2 1592.2,714.7 1595.2,720 1598.2,675.7 1601.2,655.9 1604.1,721.8 1607.1,689.4 1610.1,679.9 1613.1,689.4 1616.1,682.9 1619,655.9 1622,689.8 1625,684.3 1628,667 1631,727.9 1633.9,667 1636.9,695.5 1639.9,681.2 1642.9,634.6 1645.9,700.5 1648.8,673.1 1651.8,658.9 1654.8,678.2 1657.8,681.2 1660.8,686.3 1663.7,675.2 1666.7,667 1669.7,639.6 1672.7,700.5 1675.7,631.5 1678.6,671.1 1681.6,711.7 1684.6,648.8 1687.6,697.5 1690.6,665 1693.5,634.6 1696.5,654.9 1699.5,659.9 1702.5,639.6 1705.5,669.1 1708.4,719.8 1711.4,626.4 1714.4,684.3 1717.4,678.2 1720.4,596 1723.3,686.3 1726.3,665 1729.3,615.3 1732.3,669.1 1735.3,686.3 1738.2,632.5 1741.2,671.1 1744.2,663 1747.2,587.9 1750.2,694.4 1753.1,636.6 1756.1,621.4 1759.1,691.4 1762.1,660.9 1765.1,632.5 1768,681.2 1771,636.6 1774,596 1777,668.1 1780,638.6 1782.9,610.2 1785.9,702.6 1788.9,634.6 1791.9,631.5 1794.9,678.2 1797.8,599 1800.8,634.6 1803.8,673.1 1806.8,618.3 1809.8,652.8 1812.7,691.4 1815.7,683.3 1818.7,689.4 1821.7,702.6 1824.7,686.3 1827.6,730 1830.6,705.6 1833.6,723.9 1836.6,742.1 1839.6,759.4 1842.5,762.4 1845.5,765.5 1848.5,765.5 1851.5,780.7 1854.5,789.8 1857.4,782.7 1860.4,811.2 1863.4,841.6 1866.4,815.2 1869.4,839.6 1872.3,866 1875.3,859.9 1878.3,836.5 1881.3,861.9 1884.3,876.1 1886.6,888.9" fill="none" stroke="#7EB26D" stroke-width="1.9" stroke-linejoin="round"/>
<polyline points="1178,890.8 1181,882 1184,873.2 1186.9,864.4 1189.9,855.6 1192.9,846.7 1195.9,837.9 1198.9,829.1 1201.8,820.3 1204.8,811.5 1207.8,802.7 1210.8,793.9 1213.8,785.1 1216.7,776.2 1219.7,767.4 1222.7,758.6 1225.7,749.8 1228.7,741 1231.6,732.2 1234.6,723.4 1237.6,714.6 1240.6,705.7 1243.6,696.9 1246.5,688.1 1249.5,679.3 1252.5,670.5 1255.5,661.7 1258.5,652.9 1261.4,644.1 1264.4,635.2 1267.4,630.5 1270.4,630.5 1273.4,630.5 1276.3,630.5 1279.3,630.5 1282.3,630.5 1285.3,630.5 1288.3,630.5 1291.2,630.5 1294.2,630.5 1297.2,630.5 1300.2,630.5 1303.2,630.5 1306.1,630.5 1309.1,630.5 1312.1,630.5 1315.1,630.5 1318.1,630.5 1321,630.5 1324,630.5 1327,630.5 1330,630.5 1333,630.5 1335.9,630.5 1338.9,630.5 1341.9,630.5 1344.9,630.5 1347.9,630.5 1350.8,630.5 1353.8,630.5 1356.8,630.5 1359.8,630.5 1362.8,630.5 1365.7,630.5 1368.7,630.5 1371.7,630.5 1374.7,630.5 1377.7,630.5 1380.6,630.5 1383.6,630.5 1386.6,630.5 1389.6,630.5 1392.6,630.5 1395.5,630.5 1398.5,630.5 1401.5,630.5 1404.5,630.5 1407.5,630.5 1410.4,630.5 1413.4,630.5 1416.4,630.5 1419.4,630.5 1422.4,630.5 1425.3,630.5 1428.3,630.5 1431.3,630.5 1434.3,630.5 1437.3,630.5 1440.2,630.5 1443.2,630.5 1446.2,630.5 1449.2,630.5 1452.2,630.5 1455.1,630.5 1458.1,630.5 1461.1,630.5 1464.1,630.5 1467.1,630.5 1470,630.5 1473,630.5 1476,630.5 1479,630.5 1482,630.5 1484.9,630.5 1487.9,630.5 1490.9,630.5 1493.9,630.5 1496.9,630.5 1499.8,630.5 1502.8,630.5 1505.8,630.5 1508.8,630.5 1511.8,630.5 1514.7,630.5 1517.7,630.5 1520.7,630.5 1523.7,630.5 1526.7,630.5 1529.6,630.5 1532.6,630.5 1535.6,630.5 1538.6,630.5 1541.6,630.5 1544.5,630.5 1547.5,630.5 1550.5,630.5 1553.5,630.5 1556.5,630.5 1559.4,630.5 1562.4,630.5 1565.4,630.5 1568.4,630.5 1571.4,630.5 1574.3,630.5 1577.3,630.5 1580.3,630.5 1583.3,630.5 1586.3,630.5 1589.2,630.5 1592.2,630.5 1595.2,630.5 1598.2,630.5 1601.2,630.5 1604.1,630.5 1607.1,630.5 1610.1,630.5 1613.1,630.5 1616.1,630.5 1619,630.5 1622,630.5 1625,630.5 1628,630.5 1631,630.5 1633.9,630.5 1636.9,627.8 1639.9,627.8 1642.9,627.8 1645.9,625.1 1648.8,625.1 1651.8,625.1 1654.8,622.3 1657.8,622.3 1660.8,619.6 1663.7,619.6 1666.7,619.6 1669.7,616.9 1672.7,616.9 1675.7,616.9 1678.6,614.2 1681.6,614.2 1684.6,614.2 1687.6,611.5 1690.6,611.5 1693.5,611.5 1696.5,608.7 1699.5,608.7 1702.5,608.7 1705.5,606 1708.4,606 1711.4,606 1714.4,603.3 1717.4,603.3 1720.4,603.3 1723.3,600.6 1726.3,600.6 1729.3,597.9 1732.3,597.9 1735.3,597.9 1738.2,595.1 1741.2,595.1 1744.2,595.1 1747.2,592.4 1750.2,592.4 1753.1,592.4 1756.1,589.7 1759.1,589.7 1762.1,589.7 1765.1,587 1768,587 1771,587 1774,584.3 1777,584.3 1780,584.3 1782.9,581.5 1785.9,581.5 1788.9,581.5 1791.9,578.8 1794.9,578.8 1797.8,577.5 1800.8,577.5 1803.8,580.8 1806.8,591.8 1809.8,602.9 1812.7,613.9 1815.7,625 1818.7,636 1821.7,647.1 1824.7,658.2 1827.6,669.2 1830.6,680.3 1833.6,691.3 1836.6,702.4 1839.6,713.4 1842.5,724.5 1845.5,735.5 1848.5,746.6 1851.5,757.6 1854.5,768.7 1857.4,779.8 1860.4,790.8 1863.4,801.9 1866.4,812.9 1869.4,824 1872.3,835 1875.3,846.1 1878.3,857.1 1881.3,868.2 1884.3,879.2 1886.6,888.1" fill="none" stroke="#EAB839" stroke-width="1.9" stroke-linejoin="round"/>
<text x="1166" y="567.8" text-anchor="end" letter-spacing="-.24">125 ops</text>
<text x="1166" y="635.8" text-anchor="end" letter-spacing="-.24">100 ops</text>
<text x="1166" y="703.8" text-anchor="end" letter-spacing="-.24">75 ops</text>
<text x="1166" y="771.8" text-anchor="end" letter-spacing="-.24">50 ops</text>
<text x="1166" y="839.8" text-anchor="end" letter-spacing="-.24">25 ops</text>
<text x="1166" y="907.8" text-anchor="end" letter-spacing="-.24">0 ops</text>
<text x="1912.5" y="567.8" letter-spacing="-.2">125</text>
<text x="1912.5" y="635.8" letter-spacing="-.2">100</text>
<text x="1912.5" y="703.8" letter-spacing="-.2">75</text>
<text x="1912.5" y="771.8" letter-spacing="-.2">50</text>
<text x="1912.5" y="839.8" letter-spacing="-.2">25</text>
<text x="1912.5" y="907.8" letter-spacing="-.2">0</text>
<text x="1326.8" y="933.9" text-anchor="middle" letter-spacing="-.14">11:12</text>
<text x="1505" y="933.9" text-anchor="middle" letter-spacing="-.14">11:13</text>
<text x="1684.6" y="933.9" text-anchor="middle" letter-spacing="-.14">11:14</text>
<text x="1863" y="933.9" text-anchor="middle" letter-spacing="-.14">11:15</text>
</svg>
<div class="lg" style="left:36px;top:489px;letter-spacing:-0.34px"><s style="background:#7EB26D"></s><span style="margin-left:32px">reqs_per_sec</span></div>
<div class="lg" style="left:812px;top:489px;letter-spacing:0.04px"><s style="background:#EAB839"></s><span style="margin-left:32px">vus</span></div>
<div class="rz"></div></div>
<div class="p" style="left:1990px;top:472px;width:898px;height:540px">
<div class="ic"></div><svg class="ii" viewBox="0 0 9 17"><path d="M2.5 0h4.5v4h-4.5zM.5 6.5h6.5v7h2v3.5h-9v-3.5h2v-3.5h-1.5z" fill="#8e8e8e"/></svg>
<div class="t" style="letter-spacing:-1.39px">Errors</div>
<svg width="894" height="536" viewBox="1992 474 894 536">
<path d="M2062 562.5H2842M2062 630.5H2842M2062 698.5H2842M2062 766.5H2842M2062 834.5H2842M2062 902.5H2842M2224.8 562.5V902.5M2420.8 562.5V902.5M2616.8 562.5V902.5M2813 562.5V902.5" stroke="rgba(200,200,200,.2)" stroke-width="2" fill="none"/>
<polygon points="2062,902.5 2062,607.4 2065.3,629.1 2068.5,630.5 2071.8,655 2075.1,607.4 2078.3,755.6 2081.6,819.5 2084.9,786.9 2088.1,767.9 2091.4,752.9 2094.7,731.1 2097.9,761.1 2101.2,742 2104.5,747.5 2107.7,791 2111,815.5 2114.3,793.7 2117.5,771.9 2120.8,763.8 2124.1,762.4 2127.3,765.1 2130.6,767.9 2133.9,774.7 2137.1,807.3 2140.4,801.9 2143.7,795.1 2146.9,780.1 2150.2,767.9 2153.5,777.4 2156.7,780.1 2160,800.5 2163.3,816.8 2166.5,837.2 2169.8,787.7 2173.1,804.5 2176.3,824 2179.6,817.4 2182.9,809.3 2186.1,775.1 2189.4,761.9 2192.7,766.9 2195.9,786.5 2199.2,803.6 2202.5,818.9 2205.7,823.4 2209,807.1 2212.3,778.7 2215.5,774.8 2218.8,773.9 2222.1,781.8 2225.3,806.7 2228.6,820 2231.9,816.4 2235.2,796.4 2238.4,781.2 2241.7,762.3 2245,766.6 2248.2,784.6 2251.5,804.7 2254.8,824.5 2258,817.3 2261.3,799.9 2264.6,783.7 2267.8,767.9 2271.1,774.2 2274.4,782.9 2277.6,806 2280.9,821.9 2284.2,823.2 2287.4,799 2290.7,777.5 2294,770.1 2297.2,769.9 2300.5,775.1 2303.8,807.9 2307,827.6 2310.3,816.4 2313.6,801.5 2316.8,784.2 2320.1,763.4 2323.4,763.9 2326.6,780.4 2329.9,804.9 2333.2,827.2 2336.4,826.6 2339.7,803.9 2343,785.6 2346.2,764.9 2349.5,767.6 2352.8,781 2356,799.8 2359.3,816 2362.6,827 2365.8,807.5 2369.1,776.5 2372.4,769.5 2375.6,762.9 2378.9,775.2 2382.2,798.3 2385.4,819.5 2388.7,817.4 2392,802.5 2395.2,785.6 2398.5,763.9 2401.8,769.8 2405,775.8 2408.3,801.3 2411.6,827.7 2414.8,827 2418.1,801.2 2421.4,775 2424.6,766.2 2427.9,762.3 2431.2,786.3 2434.4,805.1 2437.7,823.7 2441,826.8 2444.2,805.5 2447.5,783.7 2450.8,771 2454,764.5 2457.3,785.1 2460.6,798.1 2463.8,822 2467.1,820.9 2470.4,801.6 2473.6,783.4 2476.9,772.8 2480.2,773.9 2483.4,785.6 2486.7,797.8 2490,828.3 2493.2,824.5 2496.5,799.7 2499.8,788.5 2503,763.5 2506.3,775.1 2509.6,781.7 2512.8,800 2516.1,823 2519.4,819.1 2522.6,805.1 2525.9,785.2 2529.2,774.8 2532.4,765.7 2535.7,779.2 2539,801.6 2542.2,819.3 2545.5,817.8 2548.8,799.2 2552.1,784.3 2555.3,765.4 2558.6,760.1 2561.9,794.8 2565.1,814.9 2568.4,807.7 2571.7,814.1 2574.9,789.6 2578.2,781.2 2581.5,749.8 2584.7,766.1 2588,785.8 2591.3,804.3 2594.5,814.1 2597.8,816.4 2601.1,792.6 2604.3,782.4 2607.6,772.7 2610.9,750.4 2614.1,774.6 2617.4,802 2620.7,811.2 2623.9,815.1 2627.2,816 2630.5,783.7 2633.7,774.3 2637,771.9 2640.3,796.8 2643.5,813.9 2646.8,820.2 2650.1,831.7 2653.3,794.6 2656.6,762.4 2659.9,754.5 2663.1,768.5 2666.4,795.2 2669.7,802.9 2672.9,816.5 2676.2,826.3 2679.5,795.2 2682.7,775.7 2686,756.3 2689.3,762.8 2692.5,766.6 2695.8,793.8 2699.1,835.7 2702.3,815.1 2705.6,799.6 2708.9,786.3 2712.1,773.5 2715.4,757.7 2718.7,772.2 2721.9,794.4 2725.2,815.6 2728.5,819.4 2731.7,789 2735,775.3 2738.3,757.1 2741.5,777.9 2744.8,774.3 2748.1,795.6 2751.3,828 2754.6,827.7 2757.9,792.3 2761.1,787.4 2764.4,771.3 2767.7,758.8 2770.9,776.8 2774.2,808.3 2777.5,767.9 2780.7,800.5 2784,831.8 2787.3,835.9 2790.5,815.5 2793.8,807.3 2797.1,799.1 2800.3,784.2 2803.6,780.1 2806.9,763.8 2810.1,791 2813.4,820.9 2816.7,865.8 2819.9,830.4 2823.2,879.4 2826.5,865.8 2829.7,761.1 2833,691.7 2836.3,633.2 2836.3,902.5" fill="#C6601A" fill-opacity=".1"/>
<polygon points="2062,902.5 2062,655 2065.3,631.9 2068.5,645.5 2071.8,581.5 2075.1,655 2078.3,743.4 2081.6,765.1 2084.9,785.5 2088.1,717.5 2091.4,761.1 2094.7,690.3 2097.9,761.1 2101.2,675.4 2104.5,736.6 2107.7,793.7 2111,763.8 2114.3,766.5 2117.5,769.2 2120.8,739.3 2124.1,761.1 2127.3,736.6 2130.6,712.1 2133.9,746.1 2137.1,784.2 2140.4,780.1 2143.7,766.5 2146.9,743.4 2150.2,771.9 2153.5,740.7 2156.7,765.1 2160,736.6 2163.3,807.3 2166.5,780.1 2169.8,777.7 2173.1,783.8 2176.3,766.9 2179.6,812 2182.9,771 2186.1,759.4 2189.4,726 2192.7,744.6 2195.9,774.3 2199.2,798.3 2202.5,795.5 2205.7,807 2209,767.5 2212.3,755.2 2215.5,748.9 2218.8,729.2 2222.1,755.3 2225.3,785.3 2228.6,818.6 2231.9,794.5 2235.2,795.2 2238.4,746.4 2241.7,733.1 2245,729.6 2248.2,750.7 2251.5,771.2 2254.8,809.3 2258,796.5 2261.3,775.7 2264.6,764.3 2267.8,733.5 2271.1,736.9 2274.4,774.5 2277.6,793 2280.9,809.8 2284.2,807 2287.4,778.1 2290.7,758.8 2294,735.3 2297.2,739.4 2300.5,748.2 2303.8,782.6 2307,803.7 2310.3,768.2 2313.6,774.2 2316.8,777 2320.1,739.5 2323.4,734.2 2326.6,767.9 2329.9,791.8 2333.2,795.3 2336.4,810.5 2339.7,756.5 2343,768.7 2346.2,736.9 2349.5,736.8 2352.8,767.6 2356,786.8 2359.3,786.3 2362.6,808.1 2365.8,757.2 2369.1,759.2 2372.4,730.2 2375.6,730.7 2378.9,762.3 2382.2,785.2 2385.4,803.3 2388.7,802.5 2392,771.9 2395.2,761.1 2398.5,739.7 2401.8,759.7 2405,767 2408.3,797.8 2411.6,812.8 2414.8,787.3 2418.1,750.6 2421.4,777 2424.6,728.6 2427.9,739.6 2431.2,770.6 2434.4,790.3 2437.7,777.9 2441,795.6 2444.2,801.4 2447.5,766.3 2450.8,739.7 2454,736.6 2457.3,750.8 2460.6,787.9 2463.8,797.5 2467.1,794.8 2470.4,787.6 2473.6,760.4 2476.9,756 2480.2,734.9 2483.4,757.5 2486.7,775.6 2490,795.4 2493.2,786.9 2496.5,783.7 2499.8,751.8 2503,747.3 2506.3,708.4 2509.6,762.6 2512.8,770.4 2516.1,814 2519.4,787.8 2522.6,783 2525.9,755.6 2529.2,758.7 2532.4,753.5 2535.7,769.7 2539,789.2 2542.2,795.9 2545.5,797.4 2548.8,786.3 2552.1,736.6 2555.3,730.9 2558.6,730.1 2561.9,760.8 2565.1,772.8 2568.4,821.8 2571.7,802.7 2574.9,793.2 2578.2,746.2 2581.5,750.8 2584.7,745 2588,755.5 2591.3,806.1 2594.5,809.4 2597.8,779.2 2601.1,784.4 2604.3,755.3 2607.6,750.5 2610.9,732.7 2614.1,759.4 2617.4,792.5 2620.7,802.8 2623.9,808.4 2627.2,786.5 2630.5,751 2633.7,726.7 2637,759.2 2640.3,751.1 2643.5,797.7 2646.8,793.6 2650.1,796.1 2653.3,795.6 2656.6,782.6 2659.9,729.9 2663.1,740.5 2666.4,757.5 2669.7,803.7 2672.9,808.8 2676.2,787.2 2679.5,765 2682.7,775.5 2686,751.7 2689.3,724.3 2692.5,734.1 2695.8,788.5 2699.1,822.7 2702.3,779.8 2705.6,766.3 2708.9,737.2 2712.1,752.2 2715.4,713.6 2718.7,768.5 2721.9,782.7 2725.2,773.9 2728.5,786 2731.7,814.9 2735,744.2 2738.3,731.7 2741.5,725.4 2744.8,780.7 2748.1,790.1 2751.3,806.5 2754.6,784.4 2757.9,765.5 2761.1,770.9 2764.4,740.5 2767.7,745.4 2770.9,782.9 2774.2,778.5 2777.5,766.5 2780.7,732.5 2784,708 2787.3,766.5 2790.5,801.9 2793.8,793.7 2797.1,773.3 2800.3,752.9 2803.6,769.2 2806.9,690.3 2810.1,788.3 2813.4,723 2816.7,845.4 2819.9,752.9 2823.2,872.6 2826.5,884.8 2829.7,766.5 2833,698.5 2836.3,630.5 2836.3,902.5" fill="#8D1107" fill-opacity=".1"/>
<polyline points="2062,607.4 2065.3,629.1 2068.5,630.5 2071.8,655 2075.1,607.4 2078.3,755.6 2081.6,819.5 2084.9,786.9 2088.1,767.9 2091.4,752.9 2094.7,731.1 2097.9,761.1 2101.2,742 2104.5,747.5 2107.7,791 2111,815.5 2114.3,793.7 2117.5,771.9 2120.8,763.8 2124.1,762.4 2127.3,765.1 2130.6,767.9 2133.9,774.7 2137.1,807.3 2140.4,801.9 2143.7,795.1 2146.9,780.1 2150.2,767.9 2153.5,777.4 2156.7,780.1 2160,800.5 2163.3,816.8 2166.5,837.2 2169.8,787.7 2173.1,804.5 2176.3,824 2179.6,817.4 2182.9,809.3 2186.1,775.1 2189.4,761.9 2192.7,766.9 2195.9,786.5 2199.2,803.6 2202.5,818.9 2205.7,823.4 2209,807.1 2212.3,778.7 2215.5,774.8 2218.8,773.9 2222.1,781.8 2225.3,806.7 2228.6,820 2231.9,816.4 2235.2,796.4 2238.4,781.2 2241.7,762.3 2245,766.6 2248.2,784.6 2251.5,804.7 2254.8,824.5 2258,817.3 2261.3,799.9 2264.6,783.7 2267.8,767.9 2271.1,774.2 2274.4,782.9 2277.6,806 2280.9,821.9 2284.2,823.2 2287.4,799 2290.7,777.5 2294,770.1 2297.2,769.9 2300.5,775.1 2303.8,807.9 2307,827.6 2310.3,816.4 2313.6,801.5 2316.8,784.2 2320.1,763.4 2323.4,763.9 2326.6,780.4 2329.9,804.9 2333.2,827.2 2336.4,826.6 2339.7,803.9 2343,785.6 2346.2,764.9 2349.5,767.6 2352.8,781 2356,799.8 2359.3,816 2362.6,827 2365.8,807.5 2369.1,776.5 2372.4,769.5 2375.6,762.9 2378.9,775.2 2382.2,798.3 2385.4,819.5 2388.7,817.4 2392,802.5 2395.2,785.6 2398.5,763.9 2401.8,769.8 2405,775.8 2408.3,801.3 2411.6,827.7 2414.8,827 2418.1,801.2 2421.4,775 2424.6,766.2 2427.9,762.3 2431.2,786.3 2434.4,805.1 2437.7,823.7 2441,826.8 2444.2,805.5 2447.5,783.7 2450.8,771 2454,764.5 2457.3,785.1 2460.6,798.1 2463.8,822 2467.1,820.9 2470.4,801.6 2473.6,783.4 2476.9,772.8 2480.2,773.9 2483.4,785.6 2486.7,797.8 2490,828.3 2493.2,824.5 2496.5,799.7 2499.8,788.5 2503,763.5 2506.3,775.1 2509.6,781.7 2512.8,800 2516.1,823 2519.4,819.1 2522.6,805.1 2525.9,785.2 2529.2,774.8 2532.4,765.7 2535.7,779.2 2539,801.6 2542.2,819.3 2545.5,817.8 2548.8,799.2 2552.1,784.3 2555.3,765.4 2558.6,760.1 2561.9,794.8 2565.1,814.9 2568.4,807.7 2571.7,814.1 2574.9,789.6 2578.2,781.2 2581.5,749.8 2584.7,766.1 2588,785.8 2591.3,804.3 2594.5,814.1 2597.8,816.4 2601.1,792.6 2604.3,782.4 2607.6,772.7 2610.9,750.4 2614.1,774.6 2617.4,802 2620.7,811.2 2623.9,815.1 2627.2,816 2630.5,783.7 2633.7,774.3 2637,771.9 2640.3,796.8 2643.5,813.9 2646.8,820.2 2650.1,831.7 2653.3,794.6 2656.6,762.4 2659.9,754.5 2663.1,768.5 2666.4,795.2 2669.7,802.9 2672.9,816.5 2676.2,826.3 2679.5,795.2 2682.7,775.7 2686,756.3 2689.3,762.8 2692.5,766.6 2695.8,793.8 2699.1,835.7 2702.3,815.1 2705.6,799.6 2708.9,786.3 2712.1,773.5 2715.4,757.7 2718.7,772.2 2721.9,794.4 2725.2,815.6 2728.5,819.4 2731.7,789 2735,775.3 2738.3,757.1 2741.5,777.9 2744.8,774.3 2748.1,795.6 2751.3,828 2754.6,827.7 2757.9,792.3 2761.1,787.4 2764.4,771.3 2767.7,758.8 2770.9,776.8 2774.2,808.3 2777.5,767.9 2780.7,800.5 2784,831.8 2787.3,835.9 2790.5,815.5 2793.8,807.3 2797.1,799.1 2800.3,784.2 2803.6,780.1 2806.9,763.8 2810.1,791 2813.4,820.9 2816.7,865.8 2819.9,830.4 2823.2,879.4 2826.5,865.8 2829.7,761.1 2833,691.7 2836.3,633.2" fill="none" stroke="#C6601A" stroke-width="1.9" stroke-linejoin="round"/>
<polyline points="2062,655 2065.3,631.9 2068.5,645.5 2071.8,581.5 2075.1,655 2078.3,743.4 2081.6,765.1 2084.9,785.5 2088.1,717.5 2091.4,761.1 2094.7,690.3 2097.9,761.1 2101.2,675.4 2104.5,736.6 2107.7,793.7 2111,763.8 2114.3,766.5 2117.5,769.2 2120.8,739.3 2124.1,761.1 2127.3,736.6 2130.6,712.1 2133.9,746.1 2137.1,784.2 2140.4,780.1 2143.7,766.5 2146.9,743.4 2150.2,771.9 2153.5,740.7 2156.7,765.1 2160,736.6 2163.3,807.3 2166.5,780.1 2169.8,777.7 2173.1,783.8 2176.3,766.9 2179.6,812 2182.9,771 2186.1,759.4 2189.4,726 2192.7,744.6 2195.9,774.3 2199.2,798.3 2202.5,795.5 2205.7,807 2209,767.5 2212.3,755.2 2215.5,748.9 2218.8,729.2 2222.1,755.3 2225.3,785.3 2228.6,818.6 2231.9,794.5 2235.2,795.2 2238.4,746.4 2241.7,733.1 2245,729.6 2248.2,750.7 2251.5,771.2 2254.8,809.3 2258,796.5 2261.3,775.7 2264.6,764.3 2267.8,733.5 2271.1,736.9 2274.4,774.5 2277.6,793 2280.9,809.8 2284.2,807 2287.4,778.1 2290.7,758.8 2294,735.3 2297.2,739.4 2300.5,748.2 2303.8,782.6 2307,803.7 2310.3,768.2 2313.6,774.2 2316.8,777 2320.1,739.5 2323.4,734.2 2326.6,767.9 2329.9,791.8 2333.2,795.3 2336.4,810.5 2339.7,756.5 2343,768.7 2346.2,736.9 2349.5,736.8 2352.8,767.6 2356,786.8 2359.3,786.3 2362.6,808.1 2365.8,757.2 2369.1,759.2 2372.4,730.2 2375.6,730.7 2378.9,762.3 2382.2,785.2 2385.4,803.3 2388.7,802.5 2392,771.9 2395.2,761.1 2398.5,739.7 2401.8,759.7 2405,767 2408.3,797.8 2411.6,812.8 2414.8,787.3 2418.1,750.6 2421.4,777 2424.6,728.6 2427.9,739.6 2431.2,770.6 2434.4,790.3 2437.7,777.9 2441,795.6 2444.2,801.4 2447.5,766.3 2450.8,739.7 2454,736.6 2457.3,750.8 2460.6,787.9 2463.8,797.5 2467.1,794.8 2470.4,787.6 2473.6,760.4 2476.9,756 2480.2,734.9 2483.4,757.5 2486.7,775.6 2490,795.4 2493.2,786.9 2496.5,783.7 2499.8,751.8 2503,747.3 2506.3,708.4 2509.6,762.6 2512.8,770.4 2516.1,814 2519.4,787.8 2522.6,783 2525.9,755.6 2529.2,758.7 2532.4,753.5 2535.7,769.7 2539,789.2 2542.2,795.9 2545.5,797.4 2548.8,786.3 2552.1,736.6 2555.3,730.9 2558.6,730.1 2561.9,760.8 2565.1,772.8 2568.4,821.8 2571.7,802.7 2574.9,793.2 2578.2,746.2 2581.5,750.8 2584.7,745 2588,755.5 2591.3,806.1 2594.5,809.4 2597.8,779.2 2601.1,784.4 2604.3,755.3 2607.6,750.5 2610.9,732.7 2614.1,759.4 2617.4,792.5 2620.7,802.8 2623.9,808.4 2627.2,786.5 2630.5,751 2633.7,726.7 2637,759.2 2640.3,751.1 2643.5,797.7 2646.8,793.6 2650.1,796.1 2653.3,795.6 2656.6,782.6 2659.9,729.9 2663.1,740.5 2666.4,757.5 2669.7,803.7 2672.9,808.8 2676.2,787.2 2679.5,765 2682.7,775.5 2686,751.7 2689.3,724.3 2692.5,734.1 2695.8,788.5 2699.1,822.7 2702.3,779.8 2705.6,766.3 2708.9,737.2 2712.1,752.2 2715.4,713.6 2718.7,768.5 2721.9,782.7 2725.2,773.9 2728.5,786 2731.7,814.9 2735,744.2 2738.3,731.7 2741.5,725.4 2744.8,780.7 2748.1,790.1 2751.3,806.5 2754.6,784.4 2757.9,765.5 2761.1,770.9 2764.4,740.5 2767.7,745.4 2770.9,782.9 2774.2,778.5 2777.5,766.5 2780.7,732.5 2784,708 2787.3,766.5 2790.5,801.9 2793.8,793.7 2797.1,773.3 2800.3,752.9 2803.6,769.2 2806.9,690.3 2810.1,788.3 2813.4,723 2816.7,845.4 2819.9,752.9 2823.2,872.6 2826.5,884.8 2829.7,766.5 2833,698.5 2836.3,630.5" fill="none" stroke="#8D1107" stroke-width="1.9" stroke-linejoin="round"/>
<text x="2050" y="567.8" text-anchor="end" letter-spacing="-.24">30%</text>
<text x="2050" y="635.8" text-anchor="end" letter-spacing="-.24">25%</text>
<text x="2050" y="703.8" text-anchor="end" letter-spacing="-.24">20%</text>
<text x="2050" y="771.8" text-anchor="end" letter-spacing="-.24">15%</text>
<text x="2050" y="839.8" text-anchor="end" letter-spacing="-.24">10%</text>
<text x="2050" y="907.8" text-anchor="end" letter-spacing="-.24">5%</text>
<text x="2224.8" y="933.9" text-anchor="middle" letter-spacing="-.14">11:12</text>
<text x="2420.8" y="933.9" text-anchor="middle" letter-spacing="-.14">11:13</text>
<text x="2616.8" y="933.9" text-anchor="middle" letter-spacing="-.14">11:14</text>
<text x="2813" y="933.9" text-anchor="middle" letter-spacing="-.14">11:15</text>
</svg>
<div class="lg" style="left:36px;top:489px;letter-spacing:-0.1px"><s style="background:#C15C17"></s><span style="margin-left:32px">check_failure_rate</span></div>
<div class="lg" style="left:266px;top:489px;letter-spacing:-0.07px"><s style="background:#890F02"></s><span style="margin-left:32px">http_failure_rate</span></div>
<div class="rz"></div></div>
<div class="p" style="left:152px;top:1032px;width:1358px;height:540px">
<div class="t" style="letter-spacing:-1px">Thresholds</div>
<div class="th" style="left:16px;top:72px;width:1322px"></div>
<div class="h" style="left:46.599999999999994px;top:83.5px;letter-spacing:-0.54px">case</div>
<div class="h" style="left:836.4px;top:83.5px;letter-spacing:-0.89px">threshold</div>
<div class="h" style="left:1116.3px;top:83.5px;letter-spacing:-0.14px">pass/fail</div>
<div class="cb" style="left:805.5px;top:130px;height:186px"></div>
<div class="cb" style="left:1085.5px;top:130px;height:186px"></div>
<div class="cc" style="left:1089.5px;top:130px;width:248.5px;height:58px;background:#f2495c"></div>
<div class="rb" style="left:16px;top:188px;width:1322px"></div>
<div class="c" style="left:46.599999999999994px;top:144.3px;letter-spacing:-0.14px">http_req_duration</div>
<div class="c" style="left:838.5px;top:144.3px;letter-spacing:0.01px">p(99)&lt;10</div>
<div class="c" style="left:1118.4px;top:144.3px;letter-spacing:0.44px;color:#fff">failed</div>
<div class="cc" style="left:1089.5px;top:192px;width:248.5px;height:58px;background:#f2495c"></div>
<div class="rb" style="left:16px;top:250px;width:1322px"></div>
<div class="c" style="left:46.599999999999994px;top:206.3px;letter-spacing:0.06px">http_req_duration{staticAsset:yes}</div>
<div class="c" style="left:838.5px;top:206.3px;letter-spacing:0.05px">p(95)&lt;100</div>
<div class="c" style="left:1118.4px;top:206.3px;letter-spacing:0.44px;color:#fff">failed</div>
<div class="cc" style="left:1089.5px;top:254px;width:248.5px;height:58px;background:#32ac2d"></div>
<div class="rb" style="left:16px;top:312px;width:1322px"></div>
<div class="c" style="left:46.599999999999994px;top:268.3px;letter-spacing:-0.15px">check_failure_rate</div>
<div class="c" style="left:838.5px;top:268.3px;letter-spacing:-0.23px">rate&lt;0.3</div>
<div class="c" style="left:1118.4px;top:268.3px;letter-spacing:0.11px;color:#fff">passed</div>
<div class="rz"></div></div>
<div class="p" style="left:1530px;top:1032px;width:1358px;height:540px">
<div class="t" style="letter-spacing:-0.99px">Checks</div>
<div class="th" style="left:15.5px;top:72px;width:1322px"></div>
<div class="h" style="left:46.40000000000009px;top:83.5px;letter-spacing:-0.95px">check</div>
<div class="h" style="left:683px;top:83.5px;letter-spacing:-0.84px">successful</div>
<div class="h" style="left:941px;top:83.5px;letter-spacing:-0.52px">failed</div>
<div class="h" style="left:1100.8000000000002px;top:83.5px;letter-spacing:-0.72px">failure_rate<svg style="position:static;display:inline-block;margin-left:7px;vertical-align:3px" width="15" height="8"><path d="M0 0h15l-7.5 8z" fill="#33b5e5"/></svg></div>
<div class="cb" style="left:651.5px;top:130px;height:310px"></div>
<div class="cb" style="left:909.5px;top:130px;height:310px"></div>
<div class="cb" style="left:1069.5px;top:130px;height:310px"></div>
<div class="cc" style="left:1073.5px;top:130px;width:264px;height:58px;background:#e0373a"></div>
<div class="rb" style="left:15.5px;top:188px;width:1322px"></div>
<div class="c" style="left:46.40000000000009px;top:144.3px;letter-spacing:0.06px">body is 1176 bytes</div>
<div class="c" style="left:685px;top:144.3px;letter-spacing:-0.15px">0</div>
<div class="c" style="left:942.5px;top:144.3px;letter-spacing:0.29px">2576</div>
<div class="c" style="left:1102.9px;top:144.3px;letter-spacing:-0.95px;color:#fff">100%</div>
<div class="cc" style="left:1073.5px;top:192px;width:264px;height:58px;background:#32ac2d"></div>
<div class="rb" style="left:15.5px;top:250px;width:1322px"></div>
<div class="c" style="left:46.40000000000009px;top:206.3px;letter-spacing:0.19px">is status 200</div>
<div class="c" style="left:685px;top:206.3px;letter-spacing:0.29px">7568</div>
<div class="c" style="left:942.5px;top:206.3px;letter-spacing:-0.15px">3</div>
<div class="c" style="left:1102.9px;top:206.3px;letter-spacing:-1.9px;color:#fff">0%</div>
<div class="cc" style="left:1073.5px;top:254px;width:264px;height:58px;background:#32ac2d"></div>
<div class="rb" style="left:15.5px;top:312px;width:1322px"></div>
<div class="c" style="left:46.40000000000009px;top:268.3px;letter-spacing:-0.08px">is unauthorized header present</div>
<div class="c" style="left:685px;top:268.3px;letter-spacing:0.29px">2501</div>
<div class="c" style="left:942.5px;top:268.3px;letter-spacing:-0.15px">0</div>
<div class="c" style="left:1102.9px;top:268.3px;letter-spacing:-1.9px;color:#fff">0%</div>
<div class="cc" style="left:1073.5px;top:316px;width:264px;height:58px;background:#32ac2d"></div>
<div class="rb" style="left:15.5px;top:374px;width:1322px"></div>
<div class="c" style="left:46.40000000000009px;top:330.3px;letter-spacing:-0.05px">is welcome header present</div>
<div class="c" style="left:685px;top:330.3px;letter-spacing:0.29px">5073</div>
<div class="c" style="left:942.5px;top:330.3px;letter-spacing:-0.15px">0</div>
<div class="c" style="left:1102.9px;top:330.3px;letter-spacing:-1.9px;color:#fff">0%</div>
<div class="cc" style="left:1073.5px;top:378px;width:264px;height:58px;background:#32ac2d"></div>
<div class="rb" style="left:15.5px;top:436px;width:1322px"></div>
<div class="c" style="left:46.40000000000009px;top:392.3px;letter-spacing:0.19px">status is 200</div>
<div class="c" style="left:685px;top:392.3px;letter-spacing:0.29px">2576</div>
<div class="c" style="left:942.5px;top:392.3px;letter-spacing:-0.15px">0</div>
<div class="c" style="left:1102.9px;top:392.3px;letter-spacing:-1.9px;color:#fff">0%</div>
<div class="rz"></div></div>
<div class="p" style="left:152px;top:1592px;width:2736px;height:540px">
<div class="t" style="letter-spacing:-0.7px">URLs</div>
<div class="th" style="left:16px;top:72px;width:2699.5px"></div>
<div class="h" style="left:45.80000000000001px;top:83.5px;letter-spacing:-1.85px">URL</div>
<div class="h" style="left:1060.8px;top:83.5px;letter-spacing:-0.75px">method</div>
<div class="h" style="left:1278.8px;top:83.5px;letter-spacing:-0.68px">status</div>
<div class="h" style="left:1922.4px;top:83.5px;letter-spacing:-0.78px">count</div>
<div class="h" style="left:2100.3px;top:83.5px;letter-spacing:-0.17px">95th</div>
<div class="h" style="left:2314.2px;top:83.5px;letter-spacing:-0.17px">99th</div>
<div class="h" style="left:2530.8px;top:83.5px;letter-spacing:-0.69px">max<svg style="position:static;display:inline-block;margin-left:7px;vertical-align:3px" width="15" height="8"><path d="M0 0h15l-7.5 8z" fill="#33b5e5"/></svg></div>
<div class="cb" style="left:1030px;top:130px;height:386px"></div>
<div class="cb" style="left:1248px;top:130px;height:386px"></div>
<div class="cb" style="left:1891.5px;top:130px;height:386px"></div>
<div class="cb" style="left:2069.5px;top:130px;height:386px"></div>
<div class="cb" style="left:2283.5px;top:130px;height:386px"></div>
<div class="cb" style="left:2499.5px;top:130px;height:386px"></div>
<div class="rb" style="left:16px;top:192px;width:2699.5px"></div>
<div class="c" style="left:44.400000000000006px;top:144.3px;letter-spacing:0.67px"><span class="u">http://test.loadimpact.com/</span></div>
<div class="c" style="left:1062.9px;top:145.7px;letter-spacing:-1.86px">GET</div>
<div class="c" style="left:1280.2px;top:145.7px;letter-spacing:0.33px">200</div>
<div class="c" style="left:1924.5px;top:145.7px;letter-spacing:0.29px">2576</div>
<div class="c" style="left:2102.4px;top:145.7px;letter-spacing:0.22px">121 ms</div>
<div class="c" style="left:2316.3px;top:145.7px;letter-spacing:0.22px">142 ms</div>
<div class="c" style="left:2532.2px;top:145.7px;letter-spacing:0.22px">338 ms</div>
<div class="rb" style="left:16px;top:258px;width:2699.5px"></div>
<div class="c" style="left:44.400000000000006px;top:210.3px;letter-spacing:0.56px"><span class="u">http://test.loadimpact.com/images/logo.png</span></div>
<div class="c" style="left:1062.9px;top:211.7px;letter-spacing:-1.86px">GET</div>
<div class="c" style="left:1280.2px;top:211.7px;letter-spacing:0.33px">200</div>
<div class="c" style="left:1924.5px;top:211.7px;letter-spacing:0.29px">2573</div>
<div class="c" style="left:2102.4px;top:211.7px;letter-spacing:0.54px">117 ms</div>
<div class="c" style="left:2316.3px;top:211.7px;letter-spacing:0.22px">136 ms</div>
<div class="c" style="left:2532.2px;top:211.7px;letter-spacing:0.22px">185 ms</div>
<div class="rb" style="left:16px;top:324px;width:2699.5px"></div>
<div class="c" style="left:44.400000000000006px;top:276.3px;letter-spacing:0.43px"><span class="u">http://test.loadimpact.com/style_404.css</span></div>
<div class="c" style="left:1062.9px;top:277.7px;letter-spacing:-1.86px">GET</div>
<div class="c" style="left:1280.2px;top:277.7px;letter-spacing:0.33px">404</div>
<div class="c" style="left:1924.5px;top:277.7px;letter-spacing:0.29px">2573</div>
<div class="c" style="left:2102.4px;top:277.7px;letter-spacing:0.54px">117 ms</div>
<div class="c" style="left:2316.3px;top:277.7px;letter-spacing:0.22px">132 ms</div>
<div class="c" style="left:2532.2px;top:277.7px;letter-spacing:0.22px">181 ms</div>
<div class="rb" style="left:16px;top:390px;width:2699.5px"></div>
<div class="c" style="left:44.400000000000006px;top:342.3px;letter-spacing:0.55px"><span class="u">http://test.loadimpact.com/style.css</span></div>
<div class="c" style="left:1062.9px;top:343.7px;letter-spacing:-1.86px">GET</div>
<div class="c" style="left:1280.2px;top:343.7px;letter-spacing:0.33px">200</div>
<div class="c" style="left:1924.5px;top:343.7px;letter-spacing:0.29px">2571</div>
<div class="c" style="left:2102.4px;top:343.7px;letter-spacing:0.54px">117 ms</div>
<div class="c" style="left:2316.3px;top:343.7px;letter-spacing:0.22px">132 ms</div>
<div class="c" style="left:2532.2px;top:343.7px;letter-spacing:0.22px">176 ms</div>
<div class="rb" style="left:16px;top:456px;width:2699.5px"></div>
<div class="c" style="left:44.400000000000006px;top:408.3px;letter-spacing:0.39px"><span class="u">http://test.loadimpact.com/my_messages.php</span></div>
<div class="c" style="left:1062.9px;top:409.7px;letter-spacing:-1.86px">GET</div>
<div class="c" style="left:1280.2px;top:409.7px;letter-spacing:0.33px">200</div>
<div class="c" style="left:1924.5px;top:409.7px;letter-spacing:0.29px">2501</div>
<div class="c" style="left:2102.4px;top:409.7px;letter-spacing:0.54px">119 ms</div>
<div class="c" style="left:2316.3px;top:409.7px;letter-spacing:0.22px">132 ms</div>
<div class="c" style="left:2532.2px;top:409.7px;letter-spacing:0.22px">175 ms</div>
<div class="c" style="left:44.400000000000006px;top:474.3px;letter-spacing:0.54px"><span class="u">http://test.loadimpact.com/login.php</span></div>
<div class="c" style="left:1062.9px;top:475.7px;letter-spacing:-1.5px">POST</div>
<div class="c" style="left:1280.2px;top:475.7px;letter-spacing:0.33px">302</div>
<div class="c" style="left:1924.5px;top:475.7px;letter-spacing:0.29px">2499</div>
<div class="c" style="left:2102.4px;top:475.7px;letter-spacing:0.22px">120 ms</div>
<div class="c" style="left:2316.3px;top:475.7px;letter-spacing:0.22px">147 ms</div>
<div class="c" style="left:2532.2px;top:475.7px;letter-spacing:0.22px">173 ms</div>
<div class="rz"></div></div>
<div class="p" style="left:152px;top:2152px;width:1358px;height:540px">
<div class="ic"></div><svg class="ii" viewBox="0 0 9 17"><path d="M2.5 0h4.5v4h-4.5zM.5 6.5h6.5v7h2v3.5h-9v-3.5h2v-3.5h-1.5z" fill="#8e8e8e"/></svg>
<div class="t" style="letter-spacing:-0.77px">Response beakdown (95th percentile)</div>
<svg width="1354" height="536" viewBox="154 2154 1354 536">
<path d="M256 2242.7H1448M256 2327.6H1448M256 2412.6H1448M256 2497.5H1448M256 2582.4H1448M355.2 2242.7V2582.4M504.9 2242.7V2582.4M654.7 2242.7V2582.4M804.4 2242.7V2582.4M954.1 2242.7V2582.4M1103.8 2242.7V2582.4M1253.6 2242.7V2582.4M1403.3 2242.7V2582.4" stroke="rgba(200,200,200,.2)" stroke-width="2" fill="none"/>
<polygon points="256,2582.4 256,2391.9 261,2391.7 266,2393.3 271,2393.5 276,2392.7 280.9,2390.5 285.9,2391 290.9,2391.6 295.9,2391.6 300.9,2391.9 305.9,2391.5 310.9,2391.2 315.9,2392.6 320.9,2390.9 325.9,2391.3 330.9,2391.3 335.8,2392.3 340.8,2392.2 345.8,2390.8 350.8,2393.1 355.8,2390.6 360.8,2391.6 365.8,2392 370.8,2392.5 375.8,2391.7 380.8,2391.4 385.7,2390.9 390.7,2391.5 395.7,2390.9 400.7,2390.8 405.7,2391.3 410.7,2393.6 415.7,2399 420.7,2463.5 425.7,2517.9 430.6,2526.3 435.6,2582.4 440.6,2392.5 445.6,2394 450.6,2582.4 455.6,2582.4 460.6,2391.6 465.6,2526.3 470.6,2463.5 475.6,2391.2 480.6,2391.8 485.5,2582.4 490.5,2393.7 495.5,2391.9 500.5,2487.3 505.5,2482.2 510.5,2391.5 515.5,2394.1 520.5,2394.1 525.5,2393.2 530.5,2391.5 535.4,2582.4 540.4,2392.7 545.4,2429.5 550.4,2472 555.4,2391.2 560.4,2394 565.4,2394.1 570.4,2393 575.4,2465.2 580.4,2392.3 585.3,2393.7 590.3,2391.6 595.3,2393.2 600.3,2391.5 605.3,2392.8 610.3,2392.6 615.3,2392.4 620.3,2392.3 625.3,2392.7 630.2,2582.4 635.2,2582.4 640.2,2582.4 645.2,2392.9 650.2,2393.5 655.2,2391.2 660.2,2392.5 665.2,2392.9 670.2,2392.4 675.2,2472 680.2,2392.3 685.1,2582.4 690.1,2394 695.1,2392.8 700.1,2489 705.1,2487.3 710.1,2392.1 715.1,2443.1 720.1,2392 725.1,2391.9 730,2394 735,2391.3 740,2392.8 745,2393.2 750,2393.3 755,2392.4 760,2393.3 765,2391.8 770,2582.4 775,2392.5 780,2393.3 784.9,2391.7 789.9,2393.6 794.9,2392.1 799.9,2582.4 804.9,2582.4 809.9,2393.2 814.9,2497.5 819.9,2391.7 824.9,2392.9 829.9,2582.4 834.8,2393.7 839.8,2514.5 844.8,2582.4 849.8,2392.2 854.8,2392.8 859.8,2393.8 864.8,2509.4 869.8,2393.6 874.8,2391.6 879.8,2393.6 884.7,2391.7 889.7,2392.2 894.7,2393.2 899.7,2393.8 904.7,2582.4 909.7,2391.8 914.7,2393.4 919.7,2392.9 924.7,2393 929.6,2424.4 934.6,2434.6 939.6,2517.9 944.6,2470.3 949.6,2582.4 954.6,2582.4 959.6,2393.7 964.6,2391.3 969.6,2391.2 974.6,2391.3 979.6,2582.4 984.5,2393.5 989.5,2582.4 994.5,2391.9 999.5,2392.2 1004.5,2393.3 1009.5,2393.5 1014.5,2392.4 1019.5,2391.7 1024.5,2391.4 1029.5,2392.1 1034.4,2391.5 1039.4,2392.4 1044.4,2391.9 1049.4,2393.3 1054.4,2392.6 1059.4,2392.9 1064.4,2392.3 1069.4,2393.4 1074.4,2392.7 1079.3,2393.1 1084.3,2392.6 1089.3,2393.7 1094.3,2391.4 1099.3,2391.7 1104.3,2412.6 1109.3,2422.7 1114.3,2399 1119.3,2429.5 1124.3,2392.3 1129.2,2391.6 1134.2,2393.4 1139.2,2392.6 1144.2,2392.8 1149.2,2444.8 1154.2,2394.2 1159.2,2516.2 1164.2,2393.8 1169.2,2582.4 1174.2,2394 1179.2,2391.6 1184.1,2392.7 1189.1,2393.2 1194.1,2392.2 1199.1,2393.1 1204.1,2393.6 1209.1,2555.2 1214.1,2393.8 1219.1,2582.4 1224.1,2392.5 1229.1,2392 1234,2582.4 1239,2394 1244,2393.1 1249,2582.4 1254,2391.8 1259,2391.8 1264,2392.9 1269,2392.7 1274,2412.6 1279,2582.4 1283.9,2392.1 1288.9,2392.1 1293.9,2392.8 1298.9,2392.6 1303.9,2394 1308.9,2392.9 1313.9,2391.3 1318.9,2582.4 1323.9,2393.1 1328.9,2582.4 1333.8,2391.8 1338.8,2392.8 1343.8,2582.4 1348.8,2582.4 1353.8,2489 1358.8,2391.7 1363.8,2582.4 1368.8,2582.4 1373.8,2392.2 1378.8,2582.4 1383.7,2390.5 1388.7,2536.5 1393.7,2582.4 1398.7,2391.8 1403.7,2582.4 1408.7,2582.4 1413.7,2582.4 1418.7,2495.8 1423.7,2526.3 1428.7,2573.9 1433.6,2392 1438.6,2441.4 1438.6,2582.4" fill="#7EB26D" fill-opacity=".1"/>
<polygon points="256,2582.4 256,2388.8 261,2390.7 266,2388.5 271,2390.9 276,2390.2 280.9,2387.3 285.9,2390.4 290.9,2390 295.9,2389.9 300.9,2376.9 305.9,2389.3 310.9,2389.8 315.9,2386.1 320.9,2380.3 325.9,2385.8 330.9,2386.4 335.8,2385.6 340.8,2384.9 345.8,2386.5 350.8,2385.4 355.8,2388.6 360.8,2385.3 365.8,2375.2 370.8,2385.2 375.8,2365 380.8,2384.8 385.7,2383.9 390.7,2387.6 395.7,2312.3 400.7,2385.1 405.7,2383.8 410.7,2386.3 415.7,2386.4 420.7,2360.7 425.7,2384.3 430.6,2383.5 435.6,2385 440.6,2375.2 445.6,2384.7 450.6,2384.8 455.6,2384.4 460.6,2385.9 465.6,2384 470.6,2381.9 475.6,2384.4 480.6,2365 485.5,2385.5 490.5,2383.2 495.5,2375.2 500.5,2331 505.5,2383.9 510.5,2348.7 515.5,2383.4 520.5,2382.3 525.5,2385.6 530.5,2366.7 535.4,2382.9 540.4,2382.2 545.4,2383.9 550.4,2384.3 555.4,2383 560.4,2385.4 565.4,2363.3 570.4,2385.3 575.4,2383.6 580.4,2363.3 585.3,2385.2 590.3,2383.2 595.3,2382 600.3,2384.9 605.3,2372.6 610.3,2384.4 615.3,2382.5 620.3,2365 625.3,2385 630.2,2385.3 635.2,2386.1 640.2,2384.1 645.2,2384.5 650.2,2385.5 655.2,2384.6 660.2,2370.8 665.2,2382.8 670.2,2373.5 675.2,2381.8 680.2,2384.1 685.1,2383.6 690.1,2384.2 695.1,2329.3 700.1,2382.6 705.1,2383.8 710.1,2307.2 715.1,2383 720.1,2382.4 725.1,2384.5 730,2383 735,2382 740,2384.2 745,2351.4 750,2385.2 755,2383.1 760,2383.2 765,2373.5 770,2382.5 775,2368.4 780,2385.4 784.9,2385.1 789.9,2351.4 794.9,2383.1 799.9,2382.4 804.9,2382.2 809.9,2385.1 814.9,2368.4 819.9,2384.8 824.9,2384.4 829.9,2348 834.8,2385.8 839.8,2385.8 844.8,2382.5 849.8,2384.9 854.8,2374.3 859.8,2383.7 864.8,2383.2 869.8,2329.3 874.8,2384.7 879.8,2367.5 884.7,2384.1 889.7,2385.3 894.7,2315.7 899.7,2382 904.7,2384.5 909.7,2383.8 914.7,2385.7 919.7,2385 924.7,2378.6 929.6,2385.7 934.6,2382.3 939.6,2382.2 944.6,2385.8 949.6,2382.1 954.6,2384.6 959.6,2350.6 964.6,2382.9 969.6,2384.9 974.6,2383.2 979.6,2361.6 984.5,2382.7 989.5,2385.1 994.5,2382.9 999.5,2314 1004.5,2383.3 1009.5,2383.9 1014.5,2385.7 1019.5,2384 1024.5,2384.7 1029.5,2363.8 1034.4,2383.2 1039.4,2383.7 1044.4,2385.4 1049.4,2383.4 1054.4,2383.4 1059.4,2385.4 1064.4,2376.9 1069.4,2383.3 1074.4,2385.7 1079.3,2366.7 1084.3,2385.6 1089.3,2384.8 1094.3,2383 1099.3,2383.6 1104.3,2383.8 1109.3,2383.4 1114.3,2373.5 1119.3,2384.8 1124.3,2385.4 1129.2,2385.9 1134.2,2369.2 1139.2,2382.9 1144.2,2383.8 1149.2,2383 1154.2,2384.6 1159.2,2340 1164.2,2384.5 1169.2,2375.2 1174.2,2386 1179.2,2384 1184.1,2359.9 1189.1,2382.8 1194.1,2370.8 1199.1,2384.8 1204.1,2384.4 1209.1,2383.8 1214.1,2375.9 1219.1,2384.7 1224.1,2382.5 1229.1,2385.7 1234,2385 1239,2375.2 1244,2385.7 1249,2382.8 1254,2383 1259,2385.4 1264,2322.5 1269,2384.4 1274,2382.9 1279,2382.6 1283.9,2382.9 1288.9,2376.9 1293.9,2385.6 1298.9,2341.2 1303.9,2370.1 1308.9,2383.9 1313.9,2348 1318.9,2385.3 1323.9,2385.1 1328.9,2382.8 1333.8,2375.2 1338.8,2382.7 1343.8,2382.3 1348.8,2382 1353.8,2384.5 1358.8,2383.8 1363.8,2383.6 1368.8,2375.2 1373.8,2381.9 1378.8,2363.3 1383.7,2384.9 1388.7,2382.4 1393.7,2348.9 1398.7,2383.6 1403.7,2383 1408.7,2386.8 1413.7,2384 1418.7,2373.5 1423.7,2386.4 1428.7,2386.9 1433.6,2387.8 1438.6,2389.1 1438.6,2582.4" fill="#6ED0E0" fill-opacity=".1"/>
<polygon points="256,2582.4 256,2394.2 261,2393.8 266,2393 271,2378.6 276,2390.5 280.9,2397.3 285.9,2393.4 290.9,2393.4 295.9,2394.4 300.9,2389.6 305.9,2395.6 310.9,2394.7 315.9,2393.1 320.9,2392.2 325.9,2393.4 330.9,2392.2 335.8,2392.1 340.8,2392.4 345.8,2392 350.8,2394.6 355.8,2394.2 360.8,2393.6 365.8,2394 370.8,2393.7 375.8,2393.1 380.8,2392.1 385.7,2392 390.7,2391.9 395.7,2394.4 400.7,2391.9 405.7,2393.1 410.7,2582.4 415.7,2582.4 420.7,2582.4 425.7,2582.4 430.6,2582.4 435.6,2582.4 440.6,2393 445.6,2394.7 450.6,2582.4 455.6,2582.4 460.6,2582.4 465.6,2582.4 470.6,2490.7 475.6,2582.4 480.6,2395.3 485.5,2582.4 490.5,2394.3 495.5,2394.7 500.5,2582.4 505.5,2582.4 510.5,2480.5 515.5,2563.7 520.5,2393.7 525.5,2393.4 530.5,2582.4 535.4,2582.4 540.4,2392.6 545.4,2507.7 550.4,2472 555.4,2507.7 560.4,2394.6 565.4,2393.7 570.4,2395 575.4,2463.5 580.4,2572.2 585.3,2485.6 590.3,2395.4 595.3,2499.2 600.3,2392.6 605.3,2394.4 610.3,2444.8 615.3,2393.6 620.3,2393.9 625.3,2392.7 630.2,2582.4 635.2,2582.4 640.2,2582.4 645.2,2463.5 650.2,2393.4 655.2,2394.6 660.2,2394 665.2,2395.5 670.2,2563.7 675.2,2480.5 680.2,2395.5 685.1,2582.4 690.1,2393.6 695.1,2393.6 700.1,2582.4 705.1,2582.4 710.1,2582.4 715.1,2582.4 720.1,2394.5 725.1,2463.5 730,2395.5 735,2393.5 740,2394.8 745,2393.8 750,2394.5 755,2394.4 760,2472 765,2394.4 770,2582.4 775,2395.5 780,2393.3 784.9,2394.9 789.9,2394.8 794.9,2394.2 799.9,2582.4 804.9,2582.4 809.9,2395.3 814.9,2582.4 819.9,2394.5 824.9,2441.4 829.9,2582.4 834.8,2392.9 839.8,2514.5 844.8,2582.4 849.8,2394.5 854.8,2392.9 859.8,2394.9 864.8,2509.4 869.8,2393.9 874.8,2393.1 879.8,2582.4 884.7,2394.7 889.7,2500.9 894.7,2393.1 899.7,2582.4 904.7,2582.4 909.7,2394.7 914.7,2392.2 919.7,2394.5 924.7,2394.3 929.6,2424.4 934.6,2434.6 939.6,2517.9 944.6,2470.3 949.6,2582.4 954.6,2582.4 959.6,2392.8 964.6,2395.6 969.6,2392.9 974.6,2394.2 979.6,2582.4 984.5,2392.7 989.5,2582.4 994.5,2562 999.5,2393 1004.5,2394 1009.5,2394.5 1014.5,2395.4 1019.5,2394.7 1024.5,2395.4 1029.5,2490.7 1034.4,2392.7 1039.4,2392.8 1044.4,2395.5 1049.4,2395 1054.4,2393.5 1059.4,2482.2 1064.4,2392.7 1069.4,2394.5 1074.4,2392.9 1079.3,2393.2 1084.3,2395 1089.3,2393.1 1094.3,2393.1 1099.3,2393.1 1104.3,2412.6 1109.3,2582.4 1114.3,2519.6 1119.3,2458.4 1124.3,2395.5 1129.2,2546.7 1134.2,2395.4 1139.2,2394.7 1144.2,2394.3 1149.2,2582.4 1154.2,2393.2 1159.2,2582.4 1164.2,2395.4 1169.2,2582.4 1174.2,2395.2 1179.2,2392.6 1184.1,2395.3 1189.1,2394.6 1194.1,2394.5 1199.1,2393.8 1204.1,2553.5 1209.1,2555.2 1214.1,2394.6 1219.1,2582.4 1224.1,2444.8 1229.1,2434.6 1234,2582.4 1239,2394.4 1244,2395 1249,2582.4 1254,2393.7 1259,2394.4 1264,2393.7 1269,2394.4 1274,2415.9 1279,2582.4 1283.9,2434.6 1288.9,2394.3 1293.9,2563.7 1298.9,2394.8 1303.9,2393.4 1308.9,2394.3 1313.9,2392.9 1318.9,2582.4 1323.9,2480.5 1328.9,2582.4 1333.8,2392.8 1338.8,2394.8 1343.8,2582.4 1348.8,2582.4 1353.8,2489 1358.8,2395.2 1363.8,2582.4 1368.8,2582.4 1373.8,2422.7 1378.8,2582.4 1383.7,2543.3 1388.7,2536.5 1393.7,2582.4 1398.7,2392.9 1403.7,2582.4 1408.7,2582.4 1413.7,2582.4 1418.7,2495.8 1423.7,2526.3 1428.7,2573.9 1433.6,2393.5 1438.6,2582.4 1438.6,2582.4" fill="#E24D42" fill-opacity=".1"/>
<polyline points="256,2391.9 261,2391.7 266,2393.3 271,2393.5 276,2392.7 280.9,2390.5 285.9,2391 290.9,2391.6 295.9,2391.6 300.9,2391.9 305.9,2391.5 310.9,2391.2 315.9,2392.6 320.9,2390.9 325.9,2391.3 330.9,2391.3 335.8,2392.3 340.8,2392.2 345.8,2390.8 350.8,2393.1 355.8,2390.6 360.8,2391.6 365.8,2392 370.8,2392.5 375.8,2391.7 380.8,2391.4 385.7,2390.9 390.7,2391.5 395.7,2390.9 400.7,2390.8 405.7,2391.3 410.7,2393.6 415.7,2399 420.7,2463.5 425.7,2517.9 430.6,2526.3 435.6,2582.4 440.6,2392.5 445.6,2394 450.6,2582.4 455.6,2582.4 460.6,2391.6 465.6,2526.3 470.6,2463.5 475.6,2391.2 480.6,2391.8 485.5,2582.4 490.5,2393.7 495.5,2391.9 500.5,2487.3 505.5,2482.2 510.5,2391.5 515.5,2394.1 520.5,2394.1 525.5,2393.2 530.5,2391.5 535.4,2582.4 540.4,2392.7 545.4,2429.5 550.4,2472 555.4,2391.2 560.4,2394 565.4,2394.1 570.4,2393 575.4,2465.2 580.4,2392.3 585.3,2393.7 590.3,2391.6 595.3,2393.2 600.3,2391.5 605.3,2392.8 610.3,2392.6 615.3,2392.4 620.3,2392.3 625.3,2392.7 630.2,2582.4 635.2,2582.4 640.2,2582.4 645.2,2392.9 650.2,2393.5 655.2,2391.2 660.2,2392.5 665.2,2392.9 670.2,2392.4 675.2,2472 680.2,2392.3 685.1,2582.4 690.1,2394 695.1,2392.8 700.1,2489 705.1,2487.3 710.1,2392.1 715.1,2443.1 720.1,2392 725.1,2391.9 730,2394 735,2391.3 740,2392.8 745,2393.2 750,2393.3 755,2392.4 760,2393.3 765,2391.8 770,2582.4 775,2392.5 780,2393.3 784.9,2391.7 789.9,2393.6 794.9,2392.1 799.9,2582.4 804.9,2582.4 809.9,2393.2 814.9,2497.5 819.9,2391.7 824.9,2392.9 829.9,2582.4 834.8,2393.7 839.8,2514.5 844.8,2582.4 849.8,2392.2 854.8,2392.8 859.8,2393.8 864.8,2509.4 869.8,2393.6 874.8,2391.6 879.8,2393.6 884.7,2391.7 889.7,2392.2 894.7,2393.2 899.7,2393.8 904.7,2582.4 909.7,2391.8 914.7,2393.4 919.7,2392.9 924.7,2393 929.6,2424.4 934.6,2434.6 939.6,2517.9 944.6,2470.3 949.6,2582.4 954.6,2582.4 959.6,2393.7 964.6,2391.3 969.6,2391.2 974.6,2391.3 979.6,2582.4 984.5,2393.5 989.5,2582.4 994.5,2391.9 999.5,2392.2 1004.5,2393.3 1009.5,2393.5 1014.5,2392.4 1019.5,2391.7 1024.5,2391.4 1029.5,2392.1 1034.4,2391.5 1039.4,2392.4 1044.4,2391.9 1049.4,2393.3 1054.4,2392.6 1059.4,2392.9 1064.4,2392.3 1069.4,2393.4 1074.4,2392.7 1079.3,2393.1 1084.3,2392.6 1089.3,2393.7 1094.3,2391.4 1099.3,2391.7 1104.3,2412.6 1109.3,2422.7 1114.3,2399 1119.3,2429.5 1124.3,2392.3 1129.2,2391.6 1134.2,2393.4 1139.2,2392.6 1144.2,2392.8 1149.2,2444.8 1154.2,2394.2 1159.2,2516.2 1164.2,2393.8 1169.2,2582.4 1174.2,2394 1179.2,2391.6 1184.1,2392.7 1189.1,2393.2 1194.1,2392.2 1199.1,2393.1 1204.1,2393.6 1209.1,2555.2 1214.1,2393.8 1219.1,2582.4 1224.1,2392.5 1229.1,2392 1234,2582.4 1239,2394 1244,2393.1 1249,2582.4 1254,2391.8 1259,2391.8 1264,2392.9 1269,2392.7 1274,2412.6 1279,2582.4 1283.9,2392.1 1288.9,2392.1 1293.9,2392.8 1298.9,2392.6 1303.9,2394 1308.9,2392.9 1313.9,2391.3 1318.9,2582.4 1323.9,2393.1 1328.9,2582.4 1333.8,2391.8 1338.8,2392.8 1343.8,2582.4 1348.8,2582.4 1353.8,2489 1358.8,2391.7 1363.8,2582.4 1368.8,2582.4 1373.8,2392.2 1378.8,2582.4 1383.7,2390.5 1388.7,2536.5 1393.7,2582.4 1398.7,2391.8 1403.7,2582.4 1408.7,2582.4 1413.7,2582.4 1418.7,2495.8 1423.7,2526.3 1428.7,2573.9 1433.6,2392 1438.6,2441.4" fill="none" stroke="#7EB26D" stroke-width="1.9" stroke-linejoin="round"/>
<polyline points="256,2582 1438.6,2582" fill="none" stroke="#EAB839" stroke-width="1.9" stroke-linejoin="round"/>
<polyline points="256,2388.8 261,2390.7 266,2388.5 271,2390.9 276,2390.2 280.9,2387.3 285.9,2390.4 290.9,2390 295.9,2389.9 300.9,2376.9 305.9,2389.3 310.9,2389.8 315.9,2386.1 320.9,2380.3 325.9,2385.8 330.9,2386.4 335.8,2385.6 340.8,2384.9 345.8,2386.5 350.8,2385.4 355.8,2388.6 360.8,2385.3 365.8,2375.2 370.8,2385.2 375.8,2365 380.8,2384.8 385.7,2383.9 390.7,2387.6 395.7,2312.3 400.7,2385.1 405.7,2383.8 410.7,2386.3 415.7,2386.4 420.7,2360.7 425.7,2384.3 430.6,2383.5 435.6,2385 440.6,2375.2 445.6,2384.7 450.6,2384.8 455.6,2384.4 460.6,2385.9 465.6,2384 470.6,2381.9 475.6,2384.4 480.6,2365 485.5,2385.5 490.5,2383.2 495.5,2375.2 500.5,2331 505.5,2383.9 510.5,2348.7 515.5,2383.4 520.5,2382.3 525.5,2385.6 530.5,2366.7 535.4,2382.9 540.4,2382.2 545.4,2383.9 550.4,2384.3 555.4,2383 560.4,2385.4 565.4,2363.3 570.4,2385.3 575.4,2383.6 580.4,2363.3 585.3,2385.2 590.3,2383.2 595.3,2382 600.3,2384.9 605.3,2372.6 610.3,2384.4 615.3,2382.5 620.3,2365 625.3,2385 630.2,2385.3 635.2,2386.1 640.2,2384.1 645.2,2384.5 650.2,2385.5 655.2,2384.6 660.2,2370.8 665.2,2382.8 670.2,2373.5 675.2,2381.8 680.2,2384.1 685.1,2383.6 690.1,2384.2 695.1,2329.3 700.1,2382.6 705.1,2383.8 710.1,2307.2 715.1,2383 720.1,2382.4 725.1,2384.5 730,2383 735,2382 740,2384.2 745,2351.4 750,2385.2 755,2383.1 760,2383.2 765,2373.5 770,2382.5 775,2368.4 780,2385.4 784.9,2385.1 789.9,2351.4 794.9,2383.1 799.9,2382.4 804.9,2382.2 809.9,2385.1 814.9,2368.4 819.9,2384.8 824.9,2384.4 829.9,2348 834.8,2385.8 839.8,2385.8 844.8,2382.5 849.8,2384.9 854.8,2374.3 859.8,2383.7 864.8,2383.2 869.8,2329.3 874.8,2384.7 879.8,2367.5 884.7,2384.1 889.7,2385.3 894.7,2315.7 899.7,2382 904.7,2384.5 909.7,2383.8 914.7,2385.7 919.7,2385 924.7,2378.6 929.6,2385.7 934.6,2382.3 939.6,2382.2 944.6,2385.8 949.6,2382.1 954.6,2384.6 959.6,2350.6 964.6,2382.9 969.6,2384.9 974.6,2383.2 979.6,2361.6 984.5,2382.7 989.5,2385.1 994.5,2382.9 999.5,2314 1004.5,2383.3 1009.5,2383.9 1014.5,2385.7 1019.5,2384 1024.5,2384.7 1029.5,2363.8 1034.4,2383.2 1039.4,2383.7 1044.4,2385.4 1049.4,2383.4 1054.4,2383.4 1059.4,2385.4 1064.4,2376.9 1069.4,2383.3 1074.4,2385.7 1079.3,2366.7 1084.3,2385.6 1089.3,2384.8 1094.3,2383 1099.3,2383.6 1104.3,2383.8 1109.3,2383.4 1114.3,2373.5 1119.3,2384.8 1124.3,2385.4 1129.2,2385.9 1134.2,2369.2 1139.2,2382.9 1144.2,2383.8 1149.2,2383 1154.2,2384.6 1159.2,2340 1164.2,2384.5 1169.2,2375.2 1174.2,2386 1179.2,2384 1184.1,2359.9 1189.1,2382.8 1194.1,2370.8 1199.1,2384.8 1204.1,2384.4 1209.1,2383.8 1214.1,2375.9 1219.1,2384.7 1224.1,2382.5 1229.1,2385.7 1234,2385 1239,2375.2 1244,2385.7 1249,2382.8 1254,2383 1259,2385.4 1264,2322.5 1269,2384.4 1274,2382.9 1279,2382.6 1283.9,2382.9 1288.9,2376.9 1293.9,2385.6 1298.9,2341.2 1303.9,2370.1 1308.9,2383.9 1313.9,2348 1318.9,2385.3 1323.9,2385.1 1328.9,2382.8 1333.8,2375.2 1338.8,2382.7 1343.8,2382.3 1348.8,2382 1353.8,2384.5 1358.8,2383.8 1363.8,2383.6 1368.8,2375.2 1373.8,2381.9 1378.8,2363.3 1383.7,2384.9 1388.7,2382.4 1393.7,2348.9 1398.7,2383.6 1403.7,2383 1408.7,2386.8 1413.7,2384 1418.7,2373.5 1423.7,2386.4 1428.7,2386.9 1433.6,2387.8 1438.6,2389.1" fill="none" stroke="#6ED0E0" stroke-width="1.9" stroke-linejoin="round"/>
<polyline points="256,2581.5 261,2581.2 266,2581.5 271,2581.7 276,2581.3 280.9,2579.6 285.9,2581.6 290.9,2581.6 295.9,2581.2 300.9,2581.4 305.9,2581.7 310.9,2581.5 315.9,2581.2 320.9,2581.5 325.9,2581.7 330.9,2581.4 335.8,2581.2 340.8,2581.6 345.8,2581.7 350.8,2581.3 355.8,2581.3 360.8,2581.7 365.8,2581.5 370.8,2581.2 375.8,2581.5 380.8,2581.7 385.7,2581.4 390.7,2581.2 395.7,2581.6 400.7,2581.7 405.7,2581.3 410.7,2581.3 415.7,2581.7 420.7,2581.6 425.7,2581.2 430.6,2581.4 435.6,2581.7 440.6,2581.4 445.6,2581.2 450.6,2581.5 455.6,2581.7 460.6,2581.3 465.6,2581.3 470.6,2581.7 475.6,2581.6 480.6,2581.2 485.5,2581.4 490.5,2580 495.5,2581.5 500.5,2581.2 505.5,2581.5 510.5,2581.7 515.5,2581.4 520.5,2581.3 525.5,2581.6 530.5,2581.6 535.4,2581.3 540.4,2581.3 545.4,2581.7 550.4,2581.5 555.4,2581.2 560.4,2581.5 565.4,2581.7 570.4,2581.4 575.4,2581.2 580.4,2581.6 585.3,2581.7 590.3,2581.3 595.3,2581.3 600.3,2581.7 605.3,2581.6 610.3,2581.2 615.3,2581.4 620.3,2581.7 625.3,2581.4 630.2,2581.2 635.2,2581.6 640.2,2581.7 645.2,2581.3 650.2,2581.3 655.2,2581.7 660.2,2581.6 665.2,2581.2 670.2,2581.4 675.2,2581.7 680.2,2581.5 685.1,2581.2 690.1,2579.8 695.1,2581.7 700.1,2581.3 705.1,2581.3 710.1,2581.6 715.1,2581.6 720.1,2581.2 725.1,2581.4 730,2581.7 735,2581.5 740,2581.2 745,2581.5 750,2581.7 755,2581.4 760,2581.2 765,2581.6 770,2581.7 775,2581.3 780,2581.3 784.9,2581.7 789.9,2581.5 794.9,2581.2 799.9,2581.5 804.9,2581.7 809.9,2581.4 814.9,2581.2 819.9,2581.6 824.9,2581.7 829.9,2581.3 834.8,2581.3 839.8,2581.7 844.8,2581.6 849.8,2581.2 854.8,2581.4 859.8,2581.7 864.8,2581.5 869.8,2581.2 874.8,2581.5 879.8,2581.7 884.7,2581.3 889.7,2581.3 894.7,2581.7 899.7,2579.9 904.7,2581.2 909.7,2581.4 914.7,2581.7 919.7,2581.5 924.7,2581.2 929.6,2581.5 934.6,2581.7 939.6,2581.4 944.6,2581.2 949.6,2581.6 954.6,2581.6 959.6,2581.3 964.6,2581.3 969.6,2581.7 974.6,2581.5 979.6,2581.2 984.5,2581.5 989.5,2581.7 994.5,2581.4 999.5,2581.2 1004.5,2581.6 1009.5,2581.7 1014.5,2581.3 1019.5,2581.3 1024.5,2581.7 1029.5,2581.6 1034.4,2581.2 1039.4,2581.4 1044.4,2581.7 1049.4,2581.4 1054.4,2581.2 1059.4,2581.6 1064.4,2581.7 1069.4,2581.3 1074.4,2581.3 1079.3,2581.7 1084.3,2581.6 1089.3,2581.2 1094.3,2581.4 1099.3,2580 1104.3,2581.5 1109.3,2581.2 1114.3,2581.5 1119.3,2581.7 1124.3,2581.3 1129.2,2581.3 1134.2,2581.6 1139.2,2581.6 1144.2,2581.3 1149.2,2581.4 1154.2,2581.7 1159.2,2581.5 1164.2,2581.2 1169.2,2581.5 1174.2,2581.7 1179.2,2581.4 1184.1,2581.2 1189.1,2581.6 1194.1,2581.7 1199.1,2581.3 1204.1,2581.3 1209.1,2581.7 1214.1,2581.5 1219.1,2581.2 1224.1,2581.4 1229.1,2581.7 1234,2581.4 1239,2581.2 1244,2581.6 1249,2581.7 1254,2581.3 1259,2581.3 1264,2581.7 1269,2581.6 1274,2581.2 1279,2581.4 1283.9,2581.7 1288.9,2581.5 1293.9,2581.2 1298.9,2581.5 1303.9,2581.7 1308.9,2579.6 1313.9,2581.3 1318.9,2581.7 1323.9,2581.6 1328.9,2581.2 1333.8,2581.4 1338.8,2581.7 1343.8,2581.5 1348.8,2581.2 1353.8,2581.5 1358.8,2581.7 1363.8,2581.4 1368.8,2581.2 1373.8,2581.6 1378.8,2581.6 1383.7,2581.3 1388.7,2581.3 1393.7,2581.7 1398.7,2581.5 1403.7,2581.2 1408.7,2581.5 1413.7,2581.7 1418.7,2581.4 1423.7,2581.2 1428.7,2581.6 1433.6,2581.7 1438.6,2581.3" fill="none" stroke="#EF843C" stroke-width="1.9" stroke-linejoin="round"/>
<polyline points="256,2394.2 261,2393.8 266,2393 271,2378.6 276,2390.5 280.9,2397.3 285.9,2393.4 290.9,2393.4 295.9,2394.4 300.9,2389.6 305.9,2395.6 310.9,2394.7 315.9,2393.1 320.9,2392.2 325.9,2393.4 330.9,2392.2 335.8,2392.1 340.8,2392.4 345.8,2392 350.8,2394.6 355.8,2394.2 360.8,2393.6 365.8,2394 370.8,2393.7 375.8,2393.1 380.8,2392.1 385.7,2392 390.7,2391.9 395.7,2394.4 400.7,2391.9 405.7,2393.1 410.7,2582.4 415.7,2582.4 420.7,2582.4 425.7,2582.4 430.6,2582.4 435.6,2582.4 440.6,2393 445.6,2394.7 450.6,2582.4 455.6,2582.4 460.6,2582.4 465.6,2582.4 470.6,2490.7 475.6,2582.4 480.6,2395.3 485.5,2582.4 490.5,2394.3 495.5,2394.7 500.5,2582.4 505.5,2582.4 510.5,2480.5 515.5,2563.7 520.5,2393.7 525.5,2393.4 530.5,2582.4 535.4,2582.4 540.4,2392.6 545.4,2507.7 550.4,2472 555.4,2507.7 560.4,2394.6 565.4,2393.7 570.4,2395 575.4,2463.5 580.4,2572.2 585.3,2485.6 590.3,2395.4 595.3,2499.2 600.3,2392.6 605.3,2394.4 610.3,2444.8 615.3,2393.6 620.3,2393.9 625.3,2392.7 630.2,2582.4 635.2,2582.4 640.2,2582.4 645.2,2463.5 650.2,2393.4 655.2,2394.6 660.2,2394 665.2,2395.5 670.2,2563.7 675.2,2480.5 680.2,2395.5 685.1,2582.4 690.1,2393.6 695.1,2393.6 700.1,2582.4 705.1,2582.4 710.1,2582.4 715.1,2582.4 720.1,2394.5 725.1,2463.5 730,2395.5 735,2393.5 740,2394.8 745,2393.8 750,2394.5 755,2394.4 760,2472 765,2394.4 770,2582.4 775,2395.5 780,2393.3 784.9,2394.9 789.9,2394.8 794.9,2394.2 799.9,2582.4 804.9,2582.4 809.9,2395.3 814.9,2582.4 819.9,2394.5 824.9,2441.4 829.9,2582.4 834.8,2392.9 839.8,2514.5 844.8,2582.4 849.8,2394.5 854.8,2392.9 859.8,2394.9 864.8,2509.4 869.8,2393.9 874.8,2393.1 879.8,2582.4 884.7,2394.7 889.7,2500.9 894.7,2393.1 899.7,2582.4 904.7,2582.4 909.7,2394.7 914.7,2392.2 919.7,2394.5 924.7,2394.3 929.6,2424.4 934.6,2434.6 939.6,2517.9 944.6,2470.3 949.6,2582.4 954.6,2582.4 959.6,2392.8 964.6,2395.6 969.6,2392.9 974.6,2394.2 979.6,2582.4 984.5,2392.7 989.5,2582.4 994.5,2562 999.5,2393 1004.5,2394 1009.5,2394.5 1014.5,2395.4 1019.5,2394.7 1024.5,2395.4 1029.5,2490.7 1034.4,2392.7 1039.4,2392.8 1044.4,2395.5 1049.4,2395 1054.4,2393.5 1059.4,2482.2 1064.4,2392.7 1069.4,2394.5 1074.4,2392.9 1079.3,2393.2 1084.3,2395 1089.3,2393.1 1094.3,2393.1 1099.3,2393.1 1104.3,2412.6 1109.3,2582.4 1114.3,2519.6 1119.3,2458.4 1124.3,2395.5 1129.2,2546.7 1134.2,2395.4 1139.2,2394.7 1144.2,2394.3 1149.2,2582.4 1154.2,2393.2 1159.2,2582.4 1164.2,2395.4 1169.2,2582.4 1174.2,2395.2 1179.2,2392.6 1184.1,2395.3 1189.1,2394.6 1194.1,2394.5 1199.1,2393.8 1204.1,2553.5 1209.1,2555.2 1214.1,2394.6 1219.1,2582.4 1224.1,2444.8 1229.1,2434.6 1234,2582.4 1239,2394.4 1244,2395 1249,2582.4 1254,2393.7 1259,2394.4 1264,2393.7 1269,2394.4 1274,2415.9 1279,2582.4 1283.9,2434.6 1288.9,2394.3 1293.9,2563.7 1298.9,2394.8 1303.9,2393.4 1308.9,2394.3 1313.9,2392.9 1318.9,2582.4 1323.9,2480.5 1328.9,2582.4 1333.8,2392.8 1338.8,2394.8 1343.8,2582.4 1348.8,2582.4 1353.8,2489 1358.8,2395.2 1363.8,2582.4 1368.8,2582.4 1373.8,2422.7 1378.8,2582.4 1383.7,2543.3 1388.7,2536.5 1393.7,2582.4 1398.7,2392.9 1403.7,2582.4 1408.7,2582.4 1413.7,2582.4 1418.7,2495.8 1423.7,2526.3 1428.7,2573.9 1433.6,2393.5 1438.6,2582.4" fill="none" stroke="#E24D42" stroke-width="1.9" stroke-linejoin="round"/>
<polyline points="256,2582.4 1438.6,2582.4" fill="none" stroke="#1F78C1" stroke-width="1.9" stroke-linejoin="round"/>
<text x="244" y="2248" text-anchor="end" letter-spacing="-.24">200 ms</text>
<text x="244" y="2332.9" text-anchor="end" letter-spacing="-.24">150 ms</text>
<text x="244" y="2417.9" text-anchor="end" letter-spacing="-.24">100 ms</text>
<text x="244" y="2502.8" text-anchor="end" letter-spacing="-.24">50 ms</text>
<text x="244" y="2587.7" text-anchor="end" letter-spacing="-.24">0 ms</text>
<text x="355.2" y="2613.8" text-anchor="middle" letter-spacing="-.14">11:11:30</text>
<text x="504.9" y="2613.8" text-anchor="middle" letter-spacing="-.14">11:12:00</text>
<text x="654.7" y="2613.8" text-anchor="middle" letter-spacing="-.14">11:12:30</text>
<text x="804.4" y="2613.8" text-anchor="middle" letter-spacing="-.14">11:13:00</text>
<text x="954.1" y="2613.8" text-anchor="middle" letter-spacing="-.14">11:13:30</text>
<text x="1103.8" y="2613.8" text-anchor="middle" letter-spacing="-.14">11:14:00</text>
<text x="1253.6" y="2613.8" text-anchor="middle" letter-spacing="-.14">11:14:30</text>
<text x="1403.3" y="2613.8" text-anchor="middle" letter-spacing="-.14">11:15:00</text>
</svg>
<div class="lg" style="left:36px;top:490px;letter-spacing:0.12px"><s style="background:#7EB26D"></s><span style="margin-left:32px">blocked</span></div>
<div class="lg" style="left:164.7px;top:490px;letter-spacing:0.04px"><s style="background:#EAB839"></s><span style="margin-left:32px">sending</span></div>
<div class="lg" style="left:294px;top:490px;letter-spacing:0.27px"><s style="background:#6ED0E0"></s><span style="margin-left:32px">waiting</span></div>
<div class="lg" style="left:415.79999999999995px;top:490px;letter-spacing:-0.01px"><s style="background:#EF843C"></s><span style="margin-left:32px">receiving</span></div>
<div class="lg" style="left:555.7px;top:490px;letter-spacing:0.19px"><s style="background:#E24D42"></s><span style="margin-left:32px">connecting</span></div>
<div class="lg" style="left:716px;top:490px;letter-spacing:-0.1px"><s style="background:#1F78C1"></s><span style="margin-left:32px">tls_handshake</span></div>
<div class="rz"></div></div>
<div class="p" style="left:1530px;top:2152px;width:1358px;height:540px">
<div class="ic"></div><svg class="ii" viewBox="0 0 9 17"><path d="M2.5 0h4.5v4h-4.5zM.5 6.5h6.5v7h2v3.5h-9v-3.5h2v-3.5h-1.5z" fill="#8e8e8e"/></svg>
<div class="t" style="letter-spacing:-0.65px">Data transfer</div>
<svg width="1354" height="536" viewBox="1532 2154 1354 536">
<path d="M1638.2 2242.7H2826.2M1638.2 2327.6H2826.2M1638.2 2412.6H2826.2M1638.2 2497.5H2826.2M1638.2 2582.4H2826.2M1736.6 2242.7V2582.4M1885.8 2242.7V2582.4M2035.1 2242.7V2582.4M2184.3 2242.7V2582.4M2333.5 2242.7V2582.4M2482.8 2242.7V2582.4M2632 2242.7V2582.4M2781.2 2242.7V2582.4" stroke="rgba(200,200,200,.2)" stroke-width="2" fill="none"/>
<polygon points="1674.6,2582.4 1674.6,2577.3 1679.6,2576.3 1684.6,2575.6 1689.5,2576 1694.5,2576.2 1699.5,2577.7 1704.5,2578.2 1709.5,2575.5 1714.5,2577.8 1719.5,2569.6 1724.4,2570.4 1729.4,2571.2 1734.4,2569.4 1739.4,2567.8 1744.4,2572.9 1749.4,2569.2 1754.4,2569.6 1759.3,2570.3 1764.3,2562.2 1769.3,2564.9 1774.3,2563.3 1779.3,2564 1784.3,2563.9 1789.2,2565.9 1794.2,2562.8 1799.2,2562.2 1804.2,2563.1 1809.2,2559.5 1814.2,2556.8 1819.2,2560.4 1824.1,2560.5 1829.1,2565.8 1834.1,2562.8 1839.1,2563 1844.1,2564.3 1849.1,2558.3 1854.1,2564.1 1859,2554.6 1864,2560.7 1869,2558.7 1874,2566.3 1879,2564.5 1884,2565.2 1888.9,2567.7 1893.9,2555.5 1898.9,2559.8 1903.9,2557.9 1908.9,2555.6 1913.9,2564.9 1918.9,2562.6 1923.8,2561.6 1928.8,2557.4 1933.8,2557 1938.8,2558.2 1943.8,2562.2 1948.8,2565.8 1953.8,2565.9 1958.7,2556.9 1963.7,2554.3 1968.7,2562.5 1973.7,2563 1978.7,2565.3 1983.7,2557.7 1988.6,2554.5 1993.6,2553.7 1998.6,2565 2003.6,2561.7 2008.6,2566.9 2013.6,2553.5 2018.6,2559.2 2023.5,2558.3 2028.5,2562.8 2033.5,2560.5 2038.5,2562.1 2043.5,2560.8 2048.5,2557.7 2053.5,2559.5 2058.4,2559.2 2063.4,2567.3 2068.4,2563.9 2073.4,2556.9 2078.4,2561.3 2083.4,2557 2088.3,2563.1 2093.3,2562.6 2098.3,2564 2103.3,2562.2 2108.3,2556.1 2113.3,2556.4 2118.3,2563.1 2123.2,2561.8 2128.2,2561.7 2133.2,2561.5 2138.2,2553.3 2143.2,2559.5 2148.2,2565.1 2153.2,2561 2158.1,2563.8 2163.1,2563.4 2168.1,2561.7 2173.1,2560.1 2178.1,2565 2183.1,2564.6 2188,2564 2193,2564.2 2198,2557.2 2203,2556.4 2208,2561.4 2213,2565.4 2218,2566.3 2222.9,2565 2227.9,2558.2 2232.9,2555 2237.9,2566 2242.9,2564.6 2247.9,2562.3 2252.9,2557.9 2257.8,2562.5 2262.8,2556.9 2267.8,2560.6 2272.8,2562 2277.8,2563.3 2282.8,2565.2 2287.7,2562.5 2292.7,2555 2297.7,2560.4 2302.7,2563.2 2307.7,2564.3 2312.7,2564.2 2317.7,2557.4 2322.6,2556.7 2327.6,2562.9 2332.6,2561.1 2337.6,2564 2342.6,2557 2347.6,2558.2 2352.6,2555.6 2357.5,2565.6 2362.5,2565.2 2367.5,2561.2 2372.5,2564.4 2377.5,2555.2 2382.5,2555.3 2387.4,2558.9 2392.4,2562.1 2397.4,2564.1 2402.4,2560.8 2407.4,2559.5 2412.4,2555.8 2417.4,2565.4 2422.3,2567.6 2427.3,2562.8 2432.3,2560.1 2437.3,2556.4 2442.3,2557 2447.3,2554 2452.3,2563.1 2457.2,2563.3 2462.2,2564.7 2467.2,2557.7 2472.2,2561.9 2477.2,2553.6 2482.2,2564.2 2487.1,2564.2 2492.1,2565.8 2497.1,2561.7 2502.1,2554.7 2507.1,2559.7 2512.1,2564.2 2517.1,2564.3 2522,2562.4 2527,2561.7 2532,2558.1 2537,2563.8 2542,2560.4 2547,2549.8 2552,2556.7 2556.9,2555.6 2561.9,2552.6 2566.9,2559.6 2571.9,2551.5 2576.9,2564.1 2581.9,2561.1 2586.8,2563.6 2591.8,2557.1 2596.8,2561.1 2601.8,2564 2606.8,2563.6 2611.8,2552.9 2616.8,2557.9 2621.7,2565.8 2626.7,2552.9 2631.7,2562.7 2636.7,2550.3 2641.7,2562.4 2646.7,2568.9 2651.7,2567 2656.6,2557.6 2661.6,2564.2 2666.6,2555 2671.6,2551.8 2676.6,2560.5 2681.6,2555.6 2686.5,2544.1 2691.5,2554.4 2696.5,2555.4 2701.5,2560.1 2706.5,2558.3 2711.5,2557.9 2716.5,2554.5 2721.4,2560.1 2726.4,2557.1 2731.4,2561 2736.4,2556.6 2741.4,2564.8 2746.4,2565.1 2751.4,2567.8 2756.3,2561 2761.3,2566.4 2766.3,2561.9 2771.3,2562 2776.3,2566.8 2781.3,2572.7 2786.2,2572.1 2791.2,2570.3 2796.2,2575.2 2801.2,2572 2806.2,2570.9 2811.2,2572 2816.2,2574.2 2821.1,2578.2 2821.1,2582.4" fill="#64B0C8" fill-opacity=".1"/>
<polygon points="1674.6,2582.4 1674.6,2551.8 1679.6,2537.4 1684.6,2537.4 1689.5,2521.3 1694.5,2537.4 1699.5,2537.4 1704.5,2537.4 1709.5,2521.3 1714.5,2537.4 1719.5,2489.7 1724.4,2476.2 1729.4,2489.7 1734.4,2476.2 1739.4,2476.2 1744.4,2489.7 1749.4,2476.2 1754.4,2476.2 1759.3,2489.7 1764.3,2430.6 1769.3,2430.6 1774.3,2430.6 1779.3,2430.6 1784.3,2430.6 1789.2,2430.6 1794.2,2430.6 1799.2,2430.6 1804.2,2417.6 1809.2,2386.2 1814.2,2386.2 1819.2,2386.2 1824.1,2386.2 1829.1,2430.6 1834.1,2430.6 1839.1,2430.6 1844.1,2430.6 1849.1,2386.2 1854.1,2414.2 1859,2356.5 1864,2400.7 1869,2386.2 1874,2444.8 1879,2430.6 1884,2430.6 1888.9,2444.8 1893.9,2356.5 1898.9,2386.2 1903.9,2386.2 1908.9,2370.8 1913.9,2444.8 1918.9,2416.5 1923.8,2400.7 1928.8,2370.8 1933.8,2370.8 1938.8,2386.2 1943.8,2430.6 1948.8,2430.6 1953.8,2444.8 1958.7,2370.8 1963.7,2356.5 1968.7,2430.6 1973.7,2430.6 1978.7,2444.8 1983.7,2386.2 1988.6,2356.5 1993.6,2356.5 1998.6,2444.8 2003.6,2416.5 2008.6,2444.8 2013.6,2356.5 2018.6,2386.2 2023.5,2386.2 2028.5,2430.6 2033.5,2416.5 2038.5,2430.6 2043.5,2386.2 2048.5,2370.8 2053.5,2386.2 2058.4,2386.2 2063.4,2444.8 2068.4,2430.6 2073.4,2356.5 2078.4,2400.7 2083.4,2386.2 2088.3,2430.6 2093.3,2416.5 2098.3,2416.5 2103.3,2430.6 2108.3,2370.8 2113.3,2356.5 2118.3,2416.5 2123.2,2416.5 2128.2,2416.5 2133.2,2400.7 2138.2,2356.5 2143.2,2386.2 2148.2,2430.6 2153.2,2416.5 2158.1,2416.5 2163.1,2430.6 2168.1,2400.7 2173.1,2400.7 2178.1,2430.6 2183.1,2430.6 2188,2444.8 2193,2430.6 2198,2370.8 2203,2370.8 2208,2400.7 2213,2430.6 2218,2444.8 2222.9,2430.6 2227.9,2370.8 2232.9,2370.8 2237.9,2430.6 2242.9,2444.8 2247.9,2430.6 2252.9,2386.2 2257.8,2400.7 2262.8,2370.8 2267.8,2386.2 2272.8,2416.5 2277.8,2430.6 2282.8,2430.6 2287.7,2400.7 2292.7,2356.5 2297.7,2386.2 2302.7,2416.5 2307.7,2430.6 2312.7,2444.8 2317.7,2370.8 2322.6,2356.5 2327.6,2430.6 2332.6,2416.5 2337.6,2430.6 2342.6,2356.5 2347.6,2370.8 2352.6,2356.5 2357.5,2444.8 2362.5,2430.6 2367.5,2416.5 2372.5,2444.8 2377.5,2370.8 2382.5,2370.8 2387.4,2370.8 2392.4,2416.5 2397.4,2416.5 2402.4,2416.5 2407.4,2400.7 2412.4,2370.8 2417.4,2430.6 2422.3,2444.8 2427.3,2430.6 2432.3,2400.7 2437.3,2370.8 2442.3,2370.8 2447.3,2356.5 2452.3,2416.5 2457.2,2416.5 2462.2,2430.6 2467.2,2370.8 2472.2,2416.5 2477.2,2356.5 2482.2,2416.5 2487.1,2416.5 2492.1,2444.8 2497.1,2416.5 2502.1,2341.9 2507.1,2386.2 2512.1,2416.5 2517.1,2416.5 2522,2416.5 2527,2416.5 2532,2386.2 2537,2416.5 2542,2386.2 2547,2326.4 2552,2370.8 2556.9,2356.5 2561.9,2341.9 2566.9,2400.7 2571.9,2326.4 2576.9,2416.5 2581.9,2416.5 2586.8,2416.5 2591.8,2356.5 2596.8,2400.7 2601.8,2430.6 2606.8,2430.6 2611.8,2326.4 2616.8,2386.2 2621.7,2444.8 2626.7,2326.4 2631.7,2430.6 2636.7,2326.4 2641.7,2430.6 2646.7,2476.2 2651.7,2444.8 2656.6,2386.2 2661.6,2444.8 2666.6,2356.5 2671.6,2341.9 2676.6,2416.5 2681.6,2356.5 2686.5,2279.2 2691.5,2365 2696.5,2368.4 2701.5,2381.1 2706.5,2377.7 2711.5,2382.7 2716.5,2354.8 2721.4,2405.8 2726.4,2377.7 2731.4,2393.2 2736.4,2382.7 2741.4,2437.5 2746.4,2451.6 2751.4,2451.6 2756.3,2421.4 2761.3,2451.6 2766.3,2421.4 2771.3,2421.4 2776.3,2465.7 2781.3,2497.5 2786.2,2482.5 2791.2,2479 2796.2,2511.4 2801.2,2497.5 2806.2,2497.5 2811.2,2491 2816.2,2502.2 2821.1,2541.6 2821.1,2582.4" fill="#EAB839" fill-opacity=".1"/>
<polyline points="1674.6,2577.3 1679.6,2576.3 1684.6,2575.6 1689.5,2576 1694.5,2576.2 1699.5,2577.7 1704.5,2578.2 1709.5,2575.5 1714.5,2577.8 1719.5,2569.6 1724.4,2570.4 1729.4,2571.2 1734.4,2569.4 1739.4,2567.8 1744.4,2572.9 1749.4,2569.2 1754.4,2569.6 1759.3,2570.3 1764.3,2562.2 1769.3,2564.9 1774.3,2563.3 1779.3,2564 1784.3,2563.9 1789.2,2565.9 1794.2,2562.8 1799.2,2562.2 1804.2,2563.1 1809.2,2559.5 1814.2,2556.8 1819.2,2560.4 1824.1,2560.5 1829.1,2565.8 1834.1,2562.8 1839.1,2563 1844.1,2564.3 1849.1,2558.3 1854.1,2564.1 1859,2554.6 1864,2560.7 1869,2558.7 1874,2566.3 1879,2564.5 1884,2565.2 1888.9,2567.7 1893.9,2555.5 1898.9,2559.8 1903.9,2557.9 1908.9,2555.6 1913.9,2564.9 1918.9,2562.6 1923.8,2561.6 1928.8,2557.4 1933.8,2557 1938.8,2558.2 1943.8,2562.2 1948.8,2565.8 1953.8,2565.9 1958.7,2556.9 1963.7,2554.3 1968.7,2562.5 1973.7,2563 1978.7,2565.3 1983.7,2557.7 1988.6,2554.5 1993.6,2553.7 1998.6,2565 2003.6,2561.7 2008.6,2566.9 2013.6,2553.5 2018.6,2559.2 2023.5,2558.3 2028.5,2562.8 2033.5,2560.5 2038.5,2562.1 2043.5,2560.8 2048.5,2557.7 2053.5,2559.5 2058.4,2559.2 2063.4,2567.3 2068.4,2563.9 2073.4,2556.9 2078.4,2561.3 2083.4,2557 2088.3,2563.1 2093.3,2562.6 2098.3,2564 2103.3,2562.2 2108.3,2556.1 2113.3,2556.4 2118.3,2563.1 2123.2,2561.8 2128.2,2561.7 2133.2,2561.5 2138.2,2553.3 2143.2,2559.5 2148.2,2565.1 2153.2,2561 2158.1,2563.8 2163.1,2563.4 2168.1,2561.7 2173.1,2560.1 2178.1,2565 2183.1,2564.6 2188,2564 2193,2564.2 2198,2557.2 2203,2556.4 2208,2561.4 2213,2565.4 2218,2566.3 2222.9,2565 2227.9,2558.2 2232.9,2555 2237.9,2566 2242.9,2564.6 2247.9,2562.3 2252.9,2557.9 2257.8,2562.5 2262.8,2556.9 2267.8,2560.6 2272.8,2562 2277.8,2563.3 2282.8,2565.2 2287.7,2562.5 2292.7,2555 2297.7,2560.4 2302.7,2563.2 2307.7,2564.3 2312.7,2564.2 2317.7,2557.4 2322.6,2556.7 2327.6,2562.9 2332.6,2561.1 2337.6,2564 2342.6,2557 2347.6,2558.2 2352.6,2555.6 2357.5,2565.6 2362.5,2565.2 2367.5,2561.2 2372.5,2564.4 2377.5,2555.2 2382.5,2555.3 2387.4,2558.9 2392.4,2562.1 2397.4,2564.1 2402.4,2560.8 2407.4,2559.5 2412.4,2555.8 2417.4,2565.4 2422.3,2567.6 2427.3,2562.8 2432.3,2560.1 2437.3,2556.4 2442.3,2557 2447.3,2554 2452.3,2563.1 2457.2,2563.3 2462.2,2564.7 2467.2,2557.7 2472.2,2561.9 2477.2,2553.6 2482.2,2564.2 2487.1,2564.2 2492.1,2565.8 2497.1,2561.7 2502.1,2554.7 2507.1,2559.7 2512.1,2564.2 2517.1,2564.3 2522,2562.4 2527,2561.7 2532,2558.1 2537,2563.8 2542,2560.4 2547,2549.8 2552,2556.7 2556.9,2555.6 2561.9,2552.6 2566.9,2559.6 2571.9,2551.5 2576.9,2564.1 2581.9,2561.1 2586.8,2563.6 2591.8,2557.1 2596.8,2561.1 2601.8,2564 2606.8,2563.6 2611.8,2552.9 2616.8,2557.9 2621.7,2565.8 2626.7,2552.9 2631.7,2562.7 2636.7,2550.3 2641.7,2562.4 2646.7,2568.9 2651.7,2567 2656.6,2557.6 2661.6,2564.2 2666.6,2555 2671.6,2551.8 2676.6,2560.5 2681.6,2555.6 2686.5,2544.1 2691.5,2554.4 2696.5,2555.4 2701.5,2560.1 2706.5,2558.3 2711.5,2557.9 2716.5,2554.5 2721.4,2560.1 2726.4,2557.1 2731.4,2561 2736.4,2556.6 2741.4,2564.8 2746.4,2565.1 2751.4,2567.8 2756.3,2561 2761.3,2566.4 2766.3,2561.9 2771.3,2562 2776.3,2566.8 2781.3,2572.7 2786.2,2572.1 2791.2,2570.3 2796.2,2575.2 2801.2,2572 2806.2,2570.9 2811.2,2572 2816.2,2574.2 2821.1,2578.2" fill="none" stroke="#64B0C8" stroke-width="1.9" stroke-linejoin="round"/>
<polyline points="1674.6,2551.8 1679.6,2537.4 1684.6,2537.4 1689.5,2521.3 1694.5,2537.4 1699.5,2537.4 1704.5,2537.4 1709.5,2521.3 1714.5,2537.4 1719.5,2489.7 1724.4,2476.2 1729.4,2489.7 1734.4,2476.2 1739.4,2476.2 1744.4,2489.7 1749.4,2476.2 1754.4,2476.2 1759.3,2489.7 1764.3,2430.6 1769.3,2430.6 1774.3,2430.6 1779.3,2430.6 1784.3,2430.6 1789.2,2430.6 1794.2,2430.6 1799.2,2430.6 1804.2,2417.6 1809.2,2386.2 1814.2,2386.2 1819.2,2386.2 1824.1,2386.2 1829.1,2430.6 1834.1,2430.6 1839.1,2430.6 1844.1,2430.6 1849.1,2386.2 1854.1,2414.2 1859,2356.5 1864,2400.7 1869,2386.2 1874,2444.8 1879,2430.6 1884,2430.6 1888.9,2444.8 1893.9,2356.5 1898.9,2386.2 1903.9,2386.2 1908.9,2370.8 1913.9,2444.8 1918.9,2416.5 1923.8,2400.7 1928.8,2370.8 1933.8,2370.8 1938.8,2386.2 1943.8,2430.6 1948.8,2430.6 1953.8,2444.8 1958.7,2370.8 1963.7,2356.5 1968.7,2430.6 1973.7,2430.6 1978.7,2444.8 1983.7,2386.2 1988.6,2356.5 1993.6,2356.5 1998.6,2444.8 2003.6,2416.5 2008.6,2444.8 2013.6,2356.5 2018.6,2386.2 2023.5,2386.2 2028.5,2430.6 2033.5,2416.5 2038.5,2430.6 2043.5,2386.2 2048.5,2370.8 2053.5,2386.2 2058.4,2386.2 2063.4,2444.8 2068.4,2430.6 2073.4,2356.5 2078.4,2400.7 2083.4,2386.2 2088.3,2430.6 2093.3,2416.5 2098.3,2416.5 2103.3,2430.6 2108.3,2370.8 2113.3,2356.5 2118.3,2416.5 2123.2,2416.5 2128.2,2416.5 2133.2,2400.7 2138.2,2356.5 2143.2,2386.2 2148.2,2430.6 2153.2,2416.5 2158.1,2416.5 2163.1,2430.6 2168.1,2400.7 2173.1,2400.7 2178.1,2430.6 2183.1,2430.6 2188,2444.8 2193,2430.6 2198,2370.8 2203,2370.8 2208,2400.7 2213,2430.6 2218,2444.8 2222.9,2430.6 2227.9,2370.8 2232.9,2370.8 2237.9,2430.6 2242.9,2444.8 2247.9,2430.6 2252.9,2386.2 2257.8,2400.7 2262.8,2370.8 2267.8,2386.2 2272.8,2416.5 2277.8,2430.6 2282.8,2430.6 2287.7,2400.7 2292.7,2356.5 2297.7,2386.2 2302.7,2416.5 2307.7,2430.6 2312.7,2444.8 2317.7,2370.8 2322.6,2356.5 2327.6,2430.6 2332.6,2416.5 2337.6,2430.6 2342.6,2356.5 2347.6,2370.8 2352.6,2356.5 2357.5,2444.8 2362.5,2430.6 2367.5,2416.5 2372.5,2444.8 2377.5,2370.8 2382.5,2370.8 2387.4,2370.8 2392.4,2416.5 2397.4,2416.5 2402.4,2416.5 2407.4,2400.7 2412.4,2370.8 2417.4,2430.6 2422.3,2444.8 2427.3,2430.6 2432.3,2400.7 2437.3,2370.8 2442.3,2370.8 2447.3,2356.5 2452.3,2416.5 2457.2,2416.5 2462.2,2430.6 2467.2,2370.8 2472.2,2416.5 2477.2,2356.5 2482.2,2416.5 2487.1,2416.5 2492.1,2444.8 2497.1,2416.5 2502.1,2341.9 2507.1,2386.2 2512.1,2416.5 2517.1,2416.5 2522,2416.5 2527,2416.5 2532,2386.2 2537,2416.5 2542,2386.2 2547,2326.4 2552,2370.8 2556.9,2356.5 2561.9,2341.9 2566.9,2400.7 2571.9,2326.4 2576.9,2416.5 2581.9,2416.5 2586.8,2416.5 2591.8,2356.5 2596.8,2400.7 2601.8,2430.6 2606.8,2430.6 2611.8,2326.4 2616.8,2386.2 2621.7,2444.8 2626.7,2326.4 2631.7,2430.6 2636.7,2326.4 2641.7,2430.6 2646.7,2476.2 2651.7,2444.8 2656.6,2386.2 2661.6,2444.8 2666.6,2356.5 2671.6,2341.9 2676.6,2416.5 2681.6,2356.5 2686.5,2279.2 2691.5,2365 2696.5,2368.4 2701.5,2381.1 2706.5,2377.7 2711.5,2382.7 2716.5,2354.8 2721.4,2405.8 2726.4,2377.7 2731.4,2393.2 2736.4,2382.7 2741.4,2437.5 2746.4,2451.6 2751.4,2451.6 2756.3,2421.4 2761.3,2451.6 2766.3,2421.4 2771.3,2421.4 2776.3,2465.7 2781.3,2497.5 2786.2,2482.5 2791.2,2479 2796.2,2511.4 2801.2,2497.5 2806.2,2497.5 2811.2,2491 2816.2,2502.2 2821.1,2541.6" fill="none" stroke="#EAB839" stroke-width="1.9" stroke-linejoin="round"/>
<text x="1626.2" y="2248" text-anchor="end" letter-spacing="-.24">200 kBs</text>
<text x="1626.2" y="2332.9" text-anchor="end" letter-spacing="-.24">150 kBs</text>
<text x="1626.2" y="2417.9" text-anchor="end" letter-spacing="-.24">100 kBs</text>
<text x="1626.2" y="2502.8" text-anchor="end" letter-spacing="-.24">50 kBs</text>
<text x="1626.2" y="2587.7" text-anchor="end" letter-spacing="-.24">0 Bs</text>
<text x="1736.6" y="2613.8" text-anchor="middle" letter-spacing="-.14">11:11:30</text>
<text x="1885.8" y="2613.8" text-anchor="middle" letter-spacing="-.14">11:12:00</text>
<text x="2035.1" y="2613.8" text-anchor="middle" letter-spacing="-.14">11:12:30</text>
<text x="2184.3" y="2613.8" text-anchor="middle" letter-spacing="-.14">11:13:00</text>
<text x="2333.5" y="2613.8" text-anchor="middle" letter-spacing="-.14">11:13:30</text>
<text x="2482.8" y="2613.8" text-anchor="middle" letter-spacing="-.14">11:14:00</text>
<text x="2632" y="2613.8" text-anchor="middle" letter-spacing="-.14">11:14:30</text>
<text x="2781.2" y="2613.8" text-anchor="middle" letter-spacing="-.14">11:15:00</text>
</svg>
<div class="lg" style="left:35.799999999999955px;top:490px;letter-spacing:-0.11px"><s style="background:#64B0C8"></s><span style="margin-left:32px">data_sent</span></div>
<div class="lg" style="left:183.5px;top:490px;letter-spacing:-0.27px"><s style="background:#EAB839"></s><span style="margin-left:32px">data_received</span></div>
<div class="rz"></div></div>
</div></body></html>
